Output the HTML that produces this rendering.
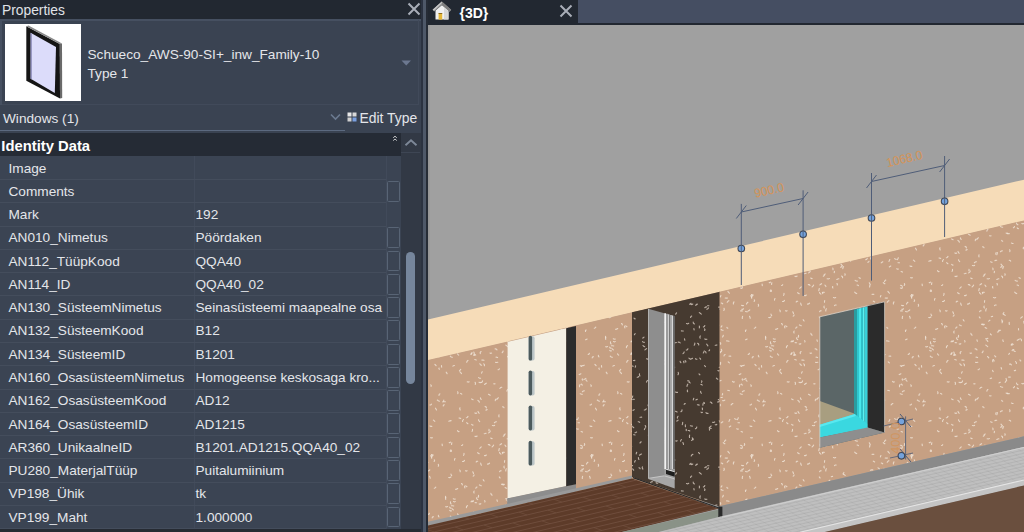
<!DOCTYPE html>
<html><head><meta charset="utf-8">
<style>
*{margin:0;padding:0;box-sizing:border-box}
html,body{width:1024px;height:532px;overflow:hidden;background:#222831;font-family:"Liberation Sans",sans-serif;color:#e4e6ea}
.a{position:absolute}
.t{position:absolute;white-space:pre;font-size:13.65px;line-height:16px}
.row{position:absolute;left:0;width:401px;height:23.3px;border-bottom:1px solid #465061;background:#3b4453}
.lab{position:absolute;left:8.5px;top:3.5px;font-size:13.6px;line-height:16px;white-space:pre;color:#e2e4e8}
.val{position:absolute;left:195.5px;top:3.5px;font-size:13.6px;line-height:16px;white-space:pre;color:#e2e4e8}
.cb{position:absolute;left:387px;width:13px;border:1.5px solid #586475;border-radius:1.5px}
</style></head>
<body>
<!-- Left properties panel -->
<div class="a" style="left:0;top:0;width:421px;height:19px;background:#222831"></div>
<div class="t" style="left:2px;top:3.2px;font-size:13.8px;color:#e0e3e8">Properties</div>
<svg class="a" style="left:406px;top:1px" width="16" height="16" viewBox="0 0 16 16"><path d="M2.5 2.5 L13.5 13.5 M13.5 2.5 L2.5 13.5" stroke="#a9aeb8" stroke-width="2"/></svg>

<!-- type selector -->
<div class="a" style="left:0;top:19px;width:421px;height:114px;background:#3a4352"></div>
<div class="a" style="left:0;top:19px;width:421px;height:1.5px;background:#465061"></div>
<div class="a" style="left:0;top:19px;width:2px;height:86px;background:#465061"></div>
<div class="a" style="left:2px;top:104px;width:417px;height:1px;background:#414a5a"></div>
<div class="a" style="left:418px;top:20px;width:1px;height:85px;background:#414a5a"></div>
<div class="a" style="left:5px;top:24px;width:76px;height:76.5px;background:#ffffff"></div>
<svg class="a" style="left:5px;top:24px" width="76" height="77" viewBox="0 0 76 77">
 <polygon points="21.3,2.2 54.8,20 55,74.6 21.3,56.7" fill="#151515"/>
 <polygon points="21.3,2.2 23.5,1.6 57,19.4 54.8,20" fill="#8a8a8a"/>
 <polygon points="54.8,20 57,19.4 57.2,74 55,74.6" fill="#6a6a6a"/>
 <polygon points="25.6,8.8 51,22.9 49.8,69 25.6,54.8" fill="#dcdcfa"/>
 <polygon points="25.6,8.8 26.8,9.4 26.8,55.5 25.6,54.8" fill="#8888b8"/>
</svg>
<div class="t" style="left:87.5px;top:46.8px">Schueco_AWS-90-SI+_inw_Family-10</div>
<div class="t" style="left:87.5px;top:66px">Type 1</div>
<svg class="a" style="left:400px;top:59px" width="13" height="8"><polygon points="1.5,1.5 11,1.5 6.25,6.5" fill="#6c7890"/></svg>

<div class="t" style="left:3px;top:110.5px">Windows (1)</div>
<svg class="a" style="left:329px;top:112px" width="13" height="10"><path d="M2 2.5 L6.5 7 L11 2.5" stroke="#6b7a90" stroke-width="1.6" fill="none"/></svg>
<div class="a" style="left:0;top:130.2px;width:345px;height:1.3px;background:#5c6a80"></div>
<svg class="a" style="left:347px;top:112px" width="10" height="10" viewBox="0 0 10 10">
 <rect x="0.5" y="0.5" width="4" height="4" fill="#e8e8e8"/><rect x="5.5" y="0.5" width="4" height="4" fill="#d8d8d8"/>
 <rect x="0.5" y="5.5" width="4" height="4" fill="#d0d0d0"/><rect x="5.5" y="5.5" width="4" height="4" fill="#7aa0e0"/>
</svg>
<div class="t" style="left:359.5px;top:109.5px;font-size:13.9px">Edit Type</div>

<!-- header -->
<div class="a" style="left:0;top:133.3px;width:401px;height:22.5px;background:#252b35"></div>
<div class="t" style="left:1.3px;top:137.5px;font-size:14.8px;font-weight:bold;color:#ffffff">Identity Data</div>
<svg class="a" style="left:392px;top:134.5px" width="6" height="7"><path d="M1.2 2.8 L3 1.2 L4.8 2.8 M1.2 5.6 L3 4 L4.8 5.6" stroke="#ddd" stroke-width="0.9" fill="none"/></svg>

<!-- scrollbar -->
<div class="a" style="left:401px;top:133.3px;width:20px;height:399px;background:#323945"></div>
<svg class="a" style="left:401px;top:134px" width="20" height="20"><path d="M4.5 11.3 L10 6.3 L15.5 11.3" stroke="#7d8898" stroke-width="1.9" fill="none"/></svg>
<div class="a" style="left:401px;top:151.8px;width:19px;height:1px;background:#3e4654"></div>
<div class="a" style="left:406px;top:252.4px;width:9.4px;height:132px;border-radius:5px;background:#76869c"></div>

<!-- panel right border -->
<div class="a" style="left:421px;top:0;width:2px;height:532px;background:#2b3240"></div>
<div class="a" style="left:422.8px;top:0;width:3px;height:532px;background:#4e5868"></div>
<div class="a" style="left:425.8px;top:0;width:2.2px;height:532px;background:#262c36"></div>

<div class="a" style="left:0;top:156.2px;width:401px;height:372.5px;background:#3b4453"></div>
<div class="a" style="left:193.8px;top:156.2px;width:1px;height:372.48px;background:#414a5a"></div>
<div class="a" style="left:385.5px;top:156.2px;width:1px;height:372.48px;background:#414a5a"></div>
<div class="a" style="left:0;top:178.98px;width:386px;height:1px;background:#444d5c"></div>
<div class="t" style="left:8.5px;top:160.50px">Image</div>
<div class="a" style="left:0;top:202.26px;width:386px;height:1px;background:#444d5c"></div>
<div class="t" style="left:8.5px;top:183.78px">Comments</div>
<div class="cb" style="top:180.68px;height:20.88px"></div>
<div class="a" style="left:0;top:225.54px;width:386px;height:1px;background:#444d5c"></div>
<div class="t" style="left:8.5px;top:207.06px">Mark</div>
<div class="t" style="left:195.5px;top:207.06px">192</div>
<div class="a" style="left:0;top:248.82px;width:386px;height:1px;background:#444d5c"></div>
<div class="t" style="left:8.5px;top:230.34px">AN010_Nimetus</div>
<div class="t" style="left:195.5px;top:230.34px">Pöördaken</div>
<div class="cb" style="top:227.24px;height:20.88px"></div>
<div class="a" style="left:0;top:272.10px;width:386px;height:1px;background:#444d5c"></div>
<div class="t" style="left:8.5px;top:253.62px">AN112_TüüpKood</div>
<div class="t" style="left:195.5px;top:253.62px">QQA40</div>
<div class="cb" style="top:250.52px;height:20.88px"></div>
<div class="a" style="left:0;top:295.38px;width:386px;height:1px;background:#444d5c"></div>
<div class="t" style="left:8.5px;top:276.90px">AN114_ID</div>
<div class="t" style="left:195.5px;top:276.90px">QQA40_02</div>
<div class="cb" style="top:273.80px;height:20.88px"></div>
<div class="a" style="left:0;top:318.66px;width:386px;height:1px;background:#444d5c"></div>
<div class="t" style="left:8.5px;top:300.18px">AN130_SüsteemNimetus</div>
<div class="t" style="left:195.5px;top:300.18px">Seinasüsteemi maapealne osa</div>
<div class="cb" style="top:297.08px;height:20.88px"></div>
<div class="a" style="left:0;top:341.94px;width:386px;height:1px;background:#444d5c"></div>
<div class="t" style="left:8.5px;top:323.46px">AN132_SüsteemKood</div>
<div class="t" style="left:195.5px;top:323.46px">B12</div>
<div class="cb" style="top:320.36px;height:20.88px"></div>
<div class="a" style="left:0;top:365.22px;width:386px;height:1px;background:#444d5c"></div>
<div class="t" style="left:8.5px;top:346.74px">AN134_SüsteemID</div>
<div class="t" style="left:195.5px;top:346.74px">B1201</div>
<div class="cb" style="top:343.64px;height:20.88px"></div>
<div class="a" style="left:0;top:388.50px;width:386px;height:1px;background:#444d5c"></div>
<div class="t" style="left:8.5px;top:370.02px">AN160_OsasüsteemNimetus</div>
<div class="t" style="left:195.5px;top:370.02px">Homogeense keskosaga kro...</div>
<div class="cb" style="top:366.92px;height:20.88px"></div>
<div class="a" style="left:0;top:411.78px;width:386px;height:1px;background:#444d5c"></div>
<div class="t" style="left:8.5px;top:393.30px">AN162_OsasüsteemKood</div>
<div class="t" style="left:195.5px;top:393.30px">AD12</div>
<div class="cb" style="top:390.20px;height:20.88px"></div>
<div class="a" style="left:0;top:435.06px;width:386px;height:1px;background:#444d5c"></div>
<div class="t" style="left:8.5px;top:416.58px">AN164_OsasüsteemID</div>
<div class="t" style="left:195.5px;top:416.58px">AD1215</div>
<div class="cb" style="top:413.48px;height:20.88px"></div>
<div class="a" style="left:0;top:458.34px;width:386px;height:1px;background:#444d5c"></div>
<div class="t" style="left:8.5px;top:439.86px">AR360_UnikaalneID</div>
<div class="t" style="left:195.5px;top:439.86px">B1201.AD1215.QQA40_02</div>
<div class="cb" style="top:436.76px;height:20.88px"></div>
<div class="a" style="left:0;top:481.62px;width:386px;height:1px;background:#444d5c"></div>
<div class="t" style="left:8.5px;top:463.14px">PU280_MaterjalTüüp</div>
<div class="t" style="left:195.5px;top:463.14px">Puitalumiinium</div>
<div class="cb" style="top:460.04px;height:20.88px"></div>
<div class="a" style="left:0;top:504.90px;width:386px;height:1px;background:#444d5c"></div>
<div class="t" style="left:8.5px;top:486.42px">VP198_Ühik</div>
<div class="t" style="left:195.5px;top:486.42px">tk</div>
<div class="cb" style="top:483.32px;height:20.88px"></div>
<div class="a" style="left:0;top:528.18px;width:386px;height:1px;background:#444d5c"></div>
<div class="t" style="left:8.5px;top:509.70px">VP199_Maht</div>
<div class="t" style="left:195.5px;top:509.70px">1.000000</div>
<div class="cb" style="top:506.60px;height:20.88px"></div>
<div class="a" style="left:0;top:528.6px;width:421px;height:4px;background:#262b33"></div>

<!-- tab bar -->
<div class="a" style="left:428px;top:0;width:596px;height:25px;background:#222831"></div>
<div class="a" style="left:578px;top:0;width:446px;height:23px;background:#454e62"></div>
<svg class="a" style="left:432px;top:1px" width="20" height="19" viewBox="0 0 20 19">
 <polygon points="3.5,9.5 10,4 16.5,9.5 16.5,18.6 3.5,18.6" fill="#f0f0f0"/>
 <polygon points="12,7 16.5,10.5 16.5,18.6 12,18.6" fill="#d8d8d8"/>
 <polygon points="9.8,0.5 19.2,8.8 17.6,10.8 9.8,3.8 2.2,10.6 0.6,8.8" fill="#9c9c9c"/>
 <polygon points="9.8,0.5 19.2,8.8 17.6,10.8 9.8,3.8" fill="#7e7e7e"/>
 <polygon points="0.6,8.8 9.8,0.5 9.8,2 2,9.4" fill="#c8c8c8"/>
 <rect x="6.6" y="12" width="3.6" height="6.6" fill="#e6b838"/>
 <rect x="6.6" y="12" width="3.6" height="1" fill="#8a6a20"/>
</svg>
<div class="t" style="left:459.5px;top:5px;font-size:14px;font-weight:bold;color:#ffffff">{3D}</div>
<svg class="a" style="left:558px;top:3px" width="16" height="16" viewBox="0 0 16 16"><path d="M2.5 2.5 L13.5 13.5 M13.5 2.5 L2.5 13.5" stroke="#a9aeb8" stroke-width="2"/></svg>

<!-- 3D view -->
<svg id="view" class="a" style="left:428px;top:25px" width="596" height="507" viewBox="428 25 596 507">
 <rect x="428" y="25" width="596" height="507" fill="#a0a0a0"/>
<defs>
<pattern id="wall" width="160" height="160" patternUnits="userSpaceOnUse"><rect width="160" height="160" fill="#c6a083"/><g stroke="#efe2d4" stroke-width="1.1" stroke-opacity="0.85" fill="none" stroke-linecap="round"><path d="M52.2 23.5L51.8 24.1L51.4 24.8"/><path d="M58.5 8.6L58.5 9.3L58.6 10.0"/><path d="M10.9 13.4L11.2 14.5L12.1 15.2"/><path d="M36.7 100.2L35.7 100.4L34.8 100.7"/><path d="M157.0 7.1L156.2 7.5L155.8 8.2"/><path d="M-3.0 7.1L-3.8 7.5L-4.2 8.2"/><path d="M19.5 48.9L18.8 49.4L18.1 49.7"/><path d="M102.3 58.9L102.2 59.6L102.7 60.2"/><path d="M32.8 108.0L33.0 108.9L33.0 109.7"/><path d="M73.4 47.3L72.5 48.0L72.0 48.9"/><path d="M92.9 83.6L91.9 84.0L91.1 84.8"/><path d="M156.5 17.8L156.8 18.9L157.7 19.6"/><path d="M-3.5 17.8L-3.2 18.9L-2.3 19.6"/><path d="M78.8 5.3L78.2 6.3L77.5 7.2"/><path d="M140.7 49.4L140.1 50.2L139.4 50.9"/><path d="M73.9 134.2L73.0 134.4L72.0 134.3"/><path d="M10.3 111.1L9.7 112.2L8.6 112.9"/><path d="M45.9 61.1L45.5 61.7L45.2 62.4"/><path d="M25.8 18.5L26.9 18.7L27.9 18.2"/><path d="M40.3 62.3L39.6 62.6L39.0 62.9"/><path d="M88.9 140.7L87.9 141.3L87.2 142.3"/><path d="M67.6 57.0L66.4 57.4L65.8 58.4"/><path d="M27.5 36.5L28.2 37.1L28.8 37.9"/><path d="M41.8 -0.2L42.0 0.7L42.2 1.5"/><path d="M41.8 159.8L42.0 160.7L42.2 161.5"/><path d="M152.5 109.4L152.5 110.5L152.1 111.4"/><path d="M9.5 143.2L8.6 143.9L7.5 144.1"/><path d="M61.8 63.5L62.8 63.8L63.7 63.4"/><path d="M10.0 33.0L10.8 33.4L11.6 33.1"/><path d="M-0.8 23.9L0.0 24.2L0.8 23.7"/><path d="M159.2 23.9L160.0 24.2L160.8 23.7"/><path d="M139.1 97.9L139.9 98.3L140.7 98.4"/><path d="M59.4 19.1L58.3 19.7L57.2 20.3"/><path d="M76.6 13.5L77.4 13.7L78.3 13.7"/><path d="M131.4 25.7L132.6 25.8L133.8 26.0"/><path d="M22.5 86.8L23.5 86.9L24.0 87.7"/><path d="M137.5 110.7L138.1 111.4L139.0 111.6"/><path d="M124.2 84.7L123.5 85.2L123.2 86.0"/><path d="M130.9 157.1L129.8 157.6L128.7 157.5"/><path d="M130.9 -2.9L129.8 -2.4L128.7 -2.5"/><path d="M118.4 35.4L118.4 36.3L119.0 36.9"/><path d="M3.7 43.9L4.5 44.7L4.4 45.8"/><path d="M72.8 149.9L71.6 149.9L70.4 150.3"/><path d="M34.6 35.8L35.3 36.3L35.8 36.9"/><path d="M144.0 133.4L144.0 134.5L143.6 135.4"/><path d="M14.6 105.4L13.6 105.7L12.4 105.5"/><path d="M77.2 28.0L76.5 28.6L75.6 28.7"/><path d="M155.1 62.2L155.5 63.3L155.3 64.5"/><path d="M26.1 19.8L27.2 20.3L27.8 21.4"/><path d="M24.4 132.2L23.4 132.2L22.4 132.6"/><path d="M86.6 20.9L87.8 21.0L89.0 21.3"/><path d="M84.0 148.2L84.3 149.4L83.8 150.5"/><path d="M33.3 39.6L33.8 40.3L34.2 41.0"/><path d="M40.4 66.6L41.5 67.0L42.7 67.2"/><path d="M74.2 93.1L73.3 93.3L72.5 92.9"/><path d="M80.3 84.4L80.3 85.1L80.3 85.8"/><path d="M29.9 0.2L29.3 0.6L28.7 1.1"/><path d="M29.9 160.2L29.3 160.6L28.7 161.1"/><path d="M115.5 88.2L116.0 89.0L116.5 89.9"/><path d="M125.6 16.2L125.5 17.0L125.7 17.8"/><path d="M123.8 80.1L123.6 81.2L122.7 81.9"/><path d="M70.9 97.0L70.9 98.0L70.6 98.9"/><path d="M72.3 84.1L72.4 85.3L72.0 86.5"/><path d="M139.6 150.0L140.2 150.7L140.2 151.8"/><path d="M133.5 21.6L134.4 21.9L135.3 21.6"/><path d="M39.1 10.7L38.5 11.7L37.4 12.1"/><path d="M25.1 113.9L24.7 114.6L24.0 114.9"/><path d="M155.7 35.0L154.8 35.1L153.9 35.3"/><path d="M157.6 132.7L158.4 133.2L159.2 133.7"/><path d="M-2.4 132.7L-1.6 133.2L-0.8 133.7"/><path d="M53.7 30.4L54.3 31.3L55.3 31.5"/><path d="M87.8 70.4L88.6 70.5L89.5 70.7"/><path d="M83.1 10.2L82.0 10.3L81.2 9.5"/><path d="M15.6 42.4L16.8 42.5L17.8 42.2"/><path d="M21.8 67.2L20.7 67.6L19.9 68.3"/><path d="M24.1 146.0L23.9 147.1L24.4 148.0"/><path d="M9.0 109.4L9.2 110.1L8.8 110.7"/><path d="M100.4 128.0L101.5 128.3L102.5 127.7"/><path d="M137.6 71.7L138.0 72.6L137.8 73.6"/><path d="M42.9 19.8L42.9 20.7L43.3 21.4"/><path d="M25.1 7.5L25.8 8.1L26.7 8.3"/><path d="M121.5 45.6L121.5 46.4L121.7 47.2"/><path d="M1.8 40.0L2.9 40.1L4.0 40.2"/><path d="M161.8 40.0L162.9 40.1L164.0 40.2"/><path d="M31.1 75.8L30.3 76.0L29.6 75.7"/><path d="M69.9 78.7L69.1 79.2L68.3 79.6"/><path d="M109.5 156.2L110.0 157.2L110.2 158.3"/><path d="M109.5 -3.8L110.0 -2.8L110.2 -1.7"/><path d="M101.4 64.1L101.8 64.8L102.4 65.1"/><path d="M10.8 118.0L11.3 118.5L12.1 118.6"/><path d="M135.0 138.6L134.6 139.3L134.5 140.1"/><path d="M46.1 73.1L46.9 73.5L47.8 73.6"/><path d="M154.0 154.8L153.9 155.6L153.2 156.1"/><path d="M48.6 57.1L49.5 57.1L50.4 57.0"/><path d="M80.5 31.5L80.4 32.2L80.7 32.8"/><path d="M13.7 63.8L14.4 63.9L15.1 63.8"/><path d="M37.4 92.6L37.2 93.7L36.8 94.7"/><path d="M114.3 139.8L114.6 140.7L114.1 141.4"/><path d="M24.2 115.2L23.9 115.9L23.3 116.2"/><path d="M143.5 99.5L142.7 100.4L142.6 101.5"/><path d="M84.8 80.1L83.8 80.7L82.7 80.6"/><path d="M94.0 141.9L93.4 142.9L93.4 143.9"/><path d="M4.7 20.6L5.0 21.3L4.9 22.0"/><path d="M89.8 99.5L89.4 100.4L89.0 101.4"/><path d="M1.2 126.9L0.5 127.6L-0.2 128.3"/><path d="M161.2 126.9L160.5 127.6L159.8 128.3"/><path d="M106.1 10.0L105.5 10.6L105.5 11.4"/><path d="M41.6 116.0L42.5 116.7L42.6 117.8"/><path d="M79.0 60.1L79.0 61.2L78.6 62.2"/><path d="M98.0 102.7L98.7 102.8L99.5 102.7"/><path d="M119.1 48.0L118.9 48.7L119.3 49.3"/><path d="M43.6 106.6L43.0 107.5L42.8 108.6"/><path d="M82.6 73.6L82.6 74.3L82.2 75.0"/><path d="M32.6 156.4L31.9 156.5L31.2 156.7"/><path d="M32.6 -3.6L31.9 -3.5L31.2 -3.3"/><path d="M131.0 154.1L131.2 154.9L131.7 155.6"/><path d="M151.5 33.0L151.3 33.7L151.1 34.5"/><path d="M153.3 20.7L152.4 21.2L151.5 21.1"/><path d="M113.5 36.7L112.5 37.0L112.2 37.9"/><path d="M0.4 77.8L0.6 78.7L1.2 79.3"/><path d="M160.4 77.8L160.6 78.7L161.2 79.3"/><path d="M55.6 50.2L55.0 50.6L54.3 50.6"/><path d="M135.3 19.0L134.3 19.2L133.3 18.7"/><path d="M46.0 58.4L46.4 59.6L46.6 60.8"/><path d="M57.2 67.9L57.7 68.5L58.4 68.6"/><path d="M134.4 45.5L133.5 45.7L132.9 46.2"/><path d="M81.3 29.2L81.8 30.4L81.4 31.5"/><path d="M131.1 100.6L129.9 100.9L128.7 101.2"/><path d="M115.8 7.2L115.1 7.9L114.3 8.3"/><path d="M101.9 45.6L103.1 45.8L104.2 45.2"/><path d="M74.9 54.1L75.5 55.0L75.3 56.1"/><path d="M41.0 104.1L41.6 105.0L42.4 105.6"/><path d="M25.8 25.1L26.8 25.9L27.7 26.6"/><path d="M36.2 145.0L35.2 145.0L34.5 145.6"/><path d="M30.4 13.9L30.8 14.5L31.4 14.9"/><path d="M42.4 90.8L41.3 91.1L40.4 91.7"/><path d="M65.9 83.0L66.2 83.9L67.0 84.2"/><path d="M43.5 154.5L44.4 154.8L45.2 155.4"/><path d="M137.5 33.9L138.1 34.6L138.7 35.1"/><path d="M72.4 152.1L71.3 152.6L71.1 153.8"/><path d="M6.1 113.2L5.2 113.5L4.2 113.7"/><path d="M1.2 62.4L0.0 62.6L-1.0 62.2"/><path d="M161.2 62.4L160.0 62.6L159.0 62.2"/><path d="M154.8 39.5L155.6 39.8L156.3 40.0"/><path d="M109.8 149.8L109.1 150.6L108.2 151.0"/><path d="M72.1 88.1L73.2 88.2L74.2 87.8"/><path d="M146.7 102.7L147.2 103.3L147.9 103.7"/><path d="M101.1 111.5L101.8 111.8L102.5 112.1"/><path d="M92.5 61.4L93.3 62.1L94.3 61.9"/><path d="M49.3 73.6L48.2 73.7L47.4 73.1"/><path d="M75.2 36.7L76.0 37.6L76.6 38.7"/><path d="M49.2 2.4L49.2 3.5L49.3 4.5"/><path d="M49.2 162.4L49.2 163.5L49.3 164.5"/><path d="M42.0 106.6L41.2 106.8L40.8 107.5"/><path d="M54.5 66.6L54.1 67.3L53.4 67.7"/><path d="M117.3 80.0L118.3 80.8L119.4 81.2"/><path d="M130.3 36.2L131.2 36.9L132.3 37.3"/><path d="M151.6 78.9L152.3 79.3L153.1 79.7"/><path d="M105.6 151.4L106.4 151.8L107.4 151.7"/><path d="M155.1 22.6L155.9 22.7L156.6 22.7"/><path d="M144.5 140.4L143.7 141.4L142.5 141.5"/><path d="M53.8 29.5L52.7 29.7L52.1 30.6"/><path d="M106.0 59.8L106.3 60.6L107.0 61.1"/><path d="M-0.1 43.7L0.5 44.8L1.6 45.3"/><path d="M159.9 43.7L160.5 44.8L161.6 45.3"/><path d="M153.8 32.1L154.3 33.2L154.1 34.3"/><path d="M69.1 7.0L69.2 7.9L68.6 8.6"/><path d="M31.6 58.1L30.9 58.3L30.2 58.6"/><path d="M129.2 122.6L129.9 122.7L130.5 122.2"/><path d="M148.0 40.3L147.2 41.1L146.7 42.2"/><path d="M43.9 152.4L43.6 153.2L43.0 153.8"/><path d="M49.5 44.1L50.6 44.1L51.4 44.9"/><path d="M100.6 150.9L101.4 150.9L102.3 150.9"/><path d="M152.8 151.8L153.1 152.6L153.5 153.4"/><path d="M78.0 147.9L79.0 148.5L79.6 149.5"/><path d="M131.9 122.8L131.6 123.6L131.6 124.5"/><path d="M57.1 125.0L57.9 125.2L58.5 125.7"/><path d="M38.6 10.3L39.6 10.4L40.6 10.2"/><path d="M157.7 141.3L156.8 141.4L156.2 142.0"/><path d="M-2.3 141.3L-3.2 141.4L-3.8 142.0"/><path d="M16.0 79.0L15.4 79.8L15.3 80.7"/><path d="M67.3 98.3L66.7 99.2L65.7 99.7"/><path d="M107.1 19.0L106.3 19.4L105.5 19.7"/><path d="M59.0 117.6L59.7 118.1L60.5 118.2"/><path d="M24.7 140.6L24.5 141.5L24.5 142.3"/><path d="M157.9 80.4L158.8 81.2L159.4 82.1"/><path d="M-2.1 80.4L-1.2 81.2L-0.6 82.1"/><path d="M158.5 15.2L158.6 16.4L158.0 17.4"/><path d="M-1.5 15.2L-1.4 16.4L-2.0 17.4"/><path d="M145.8 5.8L146.3 6.5L147.0 6.7"/><path d="M156.6 93.1L155.7 93.3L154.9 92.9"/><path d="M72.8 40.8L71.9 41.6L71.7 42.8"/><path d="M94.7 98.6L95.4 99.2L96.3 99.2"/><path d="M33.0 39.8L32.6 40.8L32.9 41.8"/><path d="M2.2 51.7L1.8 52.4L1.6 53.1"/><path d="M162.2 51.7L161.8 52.4L161.6 53.1"/><path d="M32.7 126.5L32.5 127.2L32.9 127.9"/><path d="M63.6 87.3L63.2 88.0L63.4 88.8"/><path d="M110.7 64.9L111.3 65.6L111.1 66.4"/><path d="M49.6 89.8L50.0 90.6L49.8 91.6"/><path d="M158.6 57.6L159.5 58.2L160.6 58.3"/><path d="M-1.4 57.6L-0.5 58.2L0.6 58.3"/><path d="M0.7 143.1L0.9 144.3L1.4 145.3"/><path d="M160.7 143.1L160.9 144.3L161.4 145.3"/><path d="M140.6 73.4L141.3 73.7L141.8 74.1"/><path d="M101.5 145.3L102.5 145.6L103.5 145.6"/><path d="M80.1 22.6L80.7 23.3L80.6 24.3"/><path d="M18.4 77.8L17.4 78.5L16.9 79.6"/><path d="M21.2 150.8L20.3 150.9L19.6 151.6"/><path d="M149.2 61.8L148.2 62.1L147.2 61.8"/><path d="M24.9 125.1L25.6 125.7L25.9 126.6"/><path d="M132.0 28.7L132.7 29.3L133.4 29.9"/><path d="M60.6 18.9L61.4 19.7L61.5 20.8"/><path d="M7.1 89.5L6.6 90.0L5.9 90.1"/><path d="M19.0 94.9L18.8 95.9L19.0 96.9"/><path d="M67.0 92.2L67.2 93.2L67.6 94.2"/><path d="M70.5 2.8L70.1 3.7L70.2 4.7"/><path d="M70.5 162.8L70.1 163.7L70.2 164.7"/><path d="M122.1 124.0L122.2 124.8L122.3 125.6"/><path d="M17.0 19.8L17.1 20.6L17.4 21.3"/><path d="M81.9 5.8L81.6 6.5L81.1 7.0"/><path d="M123.5 81.7L124.4 81.8L125.4 81.8"/><path d="M153.3 21.2L152.1 21.8L150.9 21.8"/><path d="M131.4 30.9L130.4 31.0L129.7 30.3"/><path d="M147.5 25.7L146.6 26.4L146.4 27.6"/><path d="M55.1 120.4L56.1 121.0L57.3 121.1"/><path d="M130.5 21.8L130.5 23.0L131.1 24.0"/><path d="M41.7 80.4L42.1 81.0L42.7 81.3"/><path d="M26.4 148.8L25.8 149.8L25.8 151.0"/><path d="M125.7 17.4L125.6 18.4L125.7 19.4"/><path d="M140.0 87.7L139.7 88.8L140.2 89.9"/><path d="M158.5 99.7L158.9 100.8L159.7 101.6"/><path d="M-1.5 99.7L-1.1 100.8L-0.3 101.6"/><path d="M158.0 91.4L158.5 92.4L159.1 93.3"/><path d="M-2.0 91.4L-1.5 92.4L-0.9 93.3"/><path d="M27.1 118.8L28.3 119.0L29.4 118.6"/><path d="M102.6 156.4L102.3 157.4L102.3 158.5"/><path d="M102.6 -3.6L102.3 -2.6L102.3 -1.5"/><path d="M-0.6 4.9L0.3 5.4L1.3 5.8"/><path d="M159.4 4.9L160.3 5.4L161.3 5.8"/><path d="M81.3 143.0L82.0 143.3L82.7 143.8"/><path d="M3.2 -0.3L3.6 0.4L4.1 1.0"/><path d="M3.2 159.7L3.6 160.4L4.1 161.0"/><path d="M163.2 -0.3L163.6 0.4L164.1 1.0"/><path d="M163.2 159.7L163.6 160.4L164.1 161.0"/><path d="M36.1 92.6L35.9 93.4L35.5 94.1"/><path d="M76.8 21.4L76.0 21.6L75.4 22.2"/><path d="M16.4 101.7L15.3 102.1L14.4 102.7"/><path d="M42.7 0.9L42.3 1.8L42.1 2.8"/><path d="M42.7 160.9L42.3 161.8L42.1 162.8"/><path d="M104.4 70.8L103.3 71.0L102.4 71.7"/><path d="M144.7 6.1L144.6 7.0L144.9 7.9"/><path d="M8.3 124.6L9.3 124.6L10.0 125.4"/><path d="M23.1 31.0L22.8 31.9L22.2 32.7"/><path d="M129.7 27.2L130.1 27.9L131.0 28.1"/><path d="M142.7 124.7L142.3 125.3L141.6 125.5"/><path d="M119.9 73.8L119.2 74.4L119.0 75.4"/><path d="M16.0 37.1L16.8 37.2L17.6 37.6"/><path d="M111.7 134.6L111.2 135.3L110.6 135.9"/><path d="M69.8 125.3L69.8 126.2L69.5 127.0"/><path d="M155.1 34.5L154.4 34.7L153.9 35.2"/><path d="M38.9 118.8L37.8 119.0L36.8 119.5"/><path d="M140.0 51.8L140.8 52.6L141.5 53.6"/><path d="M111.8 106.4L110.9 106.4L110.0 105.9"/><path d="M111.4 136.1L111.6 137.2L111.7 138.3"/><path d="M49.5 33.2L49.2 33.9L48.6 34.2"/><path d="M22.0 3.9L23.1 4.3L24.3 4.4"/><path d="M21.6 4.5L22.7 4.6L23.7 5.0"/><path d="M110.5 117.7L111.5 117.9L112.5 117.8"/><path d="M131.5 130.9L130.8 131.1L130.1 130.9"/><path d="M145.5 150.8L146.3 151.1L147.1 150.8"/><path d="M6.4 135.1L5.5 135.6L4.5 135.6"/><path d="M100.3 45.7L101.0 46.0L101.6 46.5"/><path d="M32.6 50.4L32.8 51.1L33.2 51.6"/><path d="M44.9 113.7L45.2 114.5L44.9 115.3"/><path d="M80.9 135.6L80.6 136.2L80.4 136.9"/><path d="M69.3 122.7L69.8 123.7L70.3 124.7"/><path d="M33.5 137.6L34.7 138.0L35.7 137.6"/><path d="M1.1 31.5L0.2 32.3L0.3 33.6"/><path d="M161.1 31.5L160.2 32.3L160.3 33.6"/><path d="M79.2 78.2L78.5 78.6L77.9 79.1"/><path d="M54.7 132.2L55.5 133.1L56.7 133.6"/><path d="M34.4 111.2L34.4 111.9L34.2 112.7"/><path d="M13.6 125.1L12.9 126.1L12.1 126.8"/><path d="M56.5 63.1L56.9 64.2L57.9 64.8"/><path d="M141.5 3.5L142.2 4.0L142.3 4.9"/><path d="M81.0 60.4L80.2 60.7L79.4 61.0"/><path d="M85.8 120.0L85.0 120.7L84.5 121.6"/><path d="M53.2 24.3L52.3 24.9L51.2 24.9"/><path d="M27.9 69.5L27.1 70.2L26.9 71.2"/><path d="M73.3 141.1L73.9 141.6L74.7 141.9"/><path d="M111.8 134.6L112.5 135.0L113.3 135.0"/><path d="M51.5 83.1L52.3 83.5L53.1 83.5"/><path d="M154.9 116.2L156.0 116.6L157.2 116.1"/><path d="M-5.1 116.2L-4.0 116.6L-2.8 116.1"/><path d="M62.4 156.8L61.5 157.4L60.7 158.2"/><path d="M62.4 -3.2L61.5 -2.6L60.7 -1.8"/><path d="M30.6 101.8L31.4 102.1L32.2 102.2"/><path d="M6.3 63.2L5.4 63.8L4.6 64.5"/><path d="M100.2 73.7L101.2 74.1L102.2 74.4"/><path d="M118.3 144.3L118.6 145.3L118.3 146.3"/><path d="M68.1 35.7L67.4 36.6L66.3 37.0"/><path d="M112.6 135.5L112.0 136.4L111.5 137.3"/><path d="M49.2 100.2L50.1 100.5L50.7 101.2"/><path d="M113.4 100.1L114.1 100.7L114.8 101.3"/><path d="M100.1 64.5L99.5 65.5L99.5 66.7"/><path d="M104.4 123.6L104.7 124.5L104.2 125.4"/><path d="M5.1 86.4L6.1 86.9L6.4 88.0"/><path d="M83.3 15.2L83.1 16.2L82.5 17.0"/><path d="M82.8 101.8L82.0 102.3L81.2 102.9"/><path d="M152.2 32.8L151.7 33.6L150.9 34.1"/><path d="M19.3 156.9L19.6 157.5L20.1 158.0"/><path d="M19.3 -3.1L19.6 -2.5L20.1 -2.0"/><path d="M63.7 1.2L63.9 2.1L63.9 3.1"/><path d="M63.7 161.2L63.9 162.1L63.9 163.1"/><path d="M55.5 41.7L56.3 42.4L56.4 43.5"/><path d="M85.1 34.5L84.3 35.0L84.0 35.9"/><path d="M21.6 123.7L20.7 124.3L19.9 124.9"/><path d="M90.8 36.1L89.9 36.2L89.0 36.0"/><path d="M130.9 129.7L131.0 130.6L131.0 131.5"/><path d="M19.5 132.4L20.0 133.4L20.9 134.1"/><path d="M60.0 39.8L60.2 40.6L60.9 40.9"/><path d="M114.9 44.4L115.5 45.0L116.1 45.6"/><path d="M69.0 101.2L68.6 102.0L67.7 102.2"/><path d="M137.7 8.5L136.7 9.1L135.5 9.2"/><path d="M22.8 132.4L22.5 133.0L22.8 133.6"/><path d="M151.7 104.4L152.3 105.0L153.0 105.1"/><path d="M37.0 123.5L37.4 124.2L37.2 125.0"/><path d="M127.6 26.5L126.7 26.9L125.6 26.7"/><path d="M107.9 142.3L107.0 143.0L106.5 144.1"/><path d="M111.5 84.2L110.8 84.9L109.9 85.0"/><path d="M88.2 41.8L88.8 42.3L89.4 42.8"/><path d="M8.5 74.3L9.4 74.7L10.2 75.2"/><path d="M85.2 138.0L86.3 138.1L87.5 138.0"/><path d="M90.8 106.0L90.0 106.4L89.3 107.0"/><path d="M154.1 11.1L153.7 12.1L154.1 13.0"/><path d="M98.4 109.0L97.5 109.2L96.8 108.7"/><path d="M82.4 77.3L81.7 77.5L81.0 77.5"/><path d="M100.9 53.8L100.0 54.2L99.2 54.6"/><path d="M83.3 122.7L84.1 123.3L84.9 123.8"/><path d="M87.9 131.4L88.6 132.3L89.5 133.1"/><path d="M80.6 42.2L80.6 43.5L80.2 44.7"/><path d="M126.2 52.2L126.7 52.9L127.1 53.7"/><path d="M100.5 125.3L101.6 125.5L102.3 126.3"/><path d="M86.9 7.4L87.3 8.0L87.9 8.2"/><path d="M148.0 96.4L147.4 97.4L146.4 97.8"/><path d="M98.3 97.7L97.9 98.7L97.3 99.6"/><path d="M109.4 33.2L109.0 34.0L108.2 34.5"/><path d="M15.1 28.9L16.2 29.0L17.0 29.9"/><path d="M105.9 58.4L104.9 59.0L103.9 59.5"/><path d="M41.1 47.5L41.3 48.3L41.6 49.1"/><path d="M101.7 149.2L102.7 149.4L103.5 148.8"/><path d="M19.3 128.5L19.0 129.7L18.8 130.8"/><path d="M2.6 60.8L2.3 61.9L1.1 62.4"/><path d="M162.6 60.8L162.3 61.9L161.1 62.4"/><path d="M75.1 65.7L76.1 66.0L77.1 65.8"/></g></pattern>
<pattern id="dark" width="160" height="160" patternUnits="userSpaceOnUse"><rect width="160" height="160" fill="#463a30"/><g stroke="#d8ccc0" stroke-width="1.1" stroke-opacity="0.8" fill="none" stroke-linecap="round"><path d="M23.2 2.5L24.3 2.5L25.1 1.8"/><path d="M23.2 162.5L24.3 162.5L25.1 161.8"/><path d="M155.3 13.8L154.6 14.1L154.4 14.8"/><path d="M115.6 38.2L115.1 38.8L115.2 39.6"/><path d="M124.8 113.7L123.8 114.2L123.4 115.2"/><path d="M100.4 112.3L100.6 113.5L101.2 114.5"/><path d="M153.6 114.7L154.3 114.8L155.0 115.0"/><path d="M130.2 11.8L130.8 12.7L131.8 13.2"/><path d="M136.9 77.6L137.8 77.8L138.6 78.1"/><path d="M69.2 107.8L70.2 108.3L71.3 108.5"/><path d="M102.9 99.9L103.2 100.8L102.9 101.6"/><path d="M151.4 124.7L151.2 125.5L151.7 126.3"/><path d="M156.6 112.1L155.8 112.5L155.0 112.8"/><path d="M156.7 132.2L156.4 133.0L156.2 133.9"/><path d="M-3.3 132.2L-3.6 133.0L-3.8 133.9"/><path d="M142.7 59.4L142.1 60.3L141.1 60.6"/><path d="M128.4 45.3L129.2 45.3L130.0 45.2"/><path d="M94.5 130.3L93.9 130.6L93.2 130.4"/><path d="M130.1 137.9L129.9 138.8L129.2 139.3"/><path d="M130.0 109.3L129.1 109.5L128.7 110.3"/><path d="M87.7 126.9L88.6 127.6L88.8 128.7"/><path d="M38.0 96.3L37.4 97.1L37.4 98.1"/><path d="M41.5 119.6L40.8 120.2L40.6 121.1"/><path d="M128.3 122.9L129.1 123.5L129.2 124.6"/><path d="M141.5 82.5L141.6 83.5L142.2 84.3"/><path d="M31.3 28.2L30.8 28.9L30.2 29.6"/><path d="M63.8 82.4L64.4 82.8L64.5 83.5"/><path d="M60.3 15.9L59.8 17.0L60.1 18.1"/><path d="M95.6 54.5L95.6 55.2L96.1 55.7"/><path d="M158.4 137.6L158.5 138.6L158.9 139.5"/><path d="M-1.6 137.6L-1.5 138.6L-1.1 139.5"/><path d="M125.8 68.0L124.7 68.2L123.6 67.7"/><path d="M153.4 40.5L154.2 40.6L154.9 40.3"/><path d="M13.6 7.0L13.4 8.2L13.3 9.3"/><path d="M150.5 145.4L151.6 145.6L152.6 145.6"/><path d="M18.5 152.8L19.2 153.5L19.7 154.4"/><path d="M152.7 106.3L153.0 107.2L153.8 107.7"/><path d="M154.0 158.2L154.5 158.7L155.2 158.9"/><path d="M154.0 -1.8L154.5 -1.3L155.2 -1.1"/><path d="M57.4 144.1L56.3 144.4L55.8 145.5"/><path d="M126.4 112.4L125.8 113.5L126.2 114.7"/><path d="M24.2 120.6L23.2 120.8L22.3 121.4"/><path d="M93.8 121.0L94.6 121.3L95.5 121.2"/><path d="M19.1 76.6L19.9 77.0L20.7 76.9"/><path d="M108.9 1.4L108.4 2.0L108.5 2.8"/><path d="M108.9 161.4L108.4 162.0L108.5 162.8"/><path d="M149.6 35.0L148.4 35.3L147.4 34.7"/><path d="M21.2 71.2L22.4 71.6L23.1 72.5"/><path d="M100.0 71.4L100.5 72.4L101.1 73.4"/><path d="M99.9 22.4L100.5 22.8L100.9 23.5"/><path d="M89.3 22.8L88.5 23.2L87.8 23.6"/><path d="M25.7 43.0L24.9 43.4L24.5 44.2"/><path d="M79.3 50.7L78.6 50.9L77.9 50.5"/><path d="M9.5 142.5L9.1 143.2L8.7 143.9"/><path d="M45.1 40.7L45.8 41.2L45.8 42.1"/><path d="M158.9 147.8L159.7 148.0L160.1 148.7"/><path d="M-1.1 147.8L-0.3 148.0L0.1 148.7"/><path d="M8.4 115.2L9.2 116.2L10.4 116.3"/><path d="M128.5 54.2L129.1 54.5L129.5 55.1"/><path d="M84.0 28.6L84.3 29.7L85.0 30.6"/><path d="M90.5 21.5L91.4 22.1L92.1 23.0"/><path d="M30.5 12.4L31.5 12.7L32.5 13.0"/><path d="M44.2 31.9L43.8 33.0L43.0 33.6"/><path d="M92.2 32.1L93.3 32.4L94.4 32.4"/><path d="M116.2 8.4L115.5 8.9L114.6 8.8"/><path d="M137.1 78.8L138.3 78.9L139.5 78.9"/><path d="M138.6 42.0L139.5 42.6L140.6 43.0"/><path d="M26.4 58.7L26.2 59.4L25.9 60.1"/><path d="M70.3 82.1L71.3 82.5L72.0 83.4"/><path d="M139.0 50.6L138.5 51.4L137.7 51.8"/><path d="M10.8 139.5L9.8 139.6L8.8 139.8"/><path d="M83.7 85.9L84.9 86.0L86.0 85.5"/><path d="M28.4 15.6L29.2 16.4L30.3 16.4"/><path d="M14.9 111.4L15.4 111.8L15.9 112.3"/><path d="M92.7 83.1L92.2 83.7L91.5 83.9"/><path d="M113.8 6.9L114.7 7.2L115.6 7.6"/><path d="M44.5 18.8L44.7 19.5L44.8 20.3"/><path d="M138.0 22.5L137.8 23.6L138.2 24.6"/><path d="M131.8 149.1L132.2 150.0L131.9 150.9"/><path d="M85.2 63.1L84.1 63.3L83.1 63.8"/><path d="M38.2 52.4L38.5 53.6L38.0 54.8"/><path d="M146.7 130.1L146.0 130.4L145.4 130.7"/><path d="M152.6 148.8L153.3 149.5L153.7 150.3"/><path d="M57.4 84.7L58.3 84.9L59.2 85.1"/><path d="M4.5 22.2L3.3 22.3L2.5 21.6"/><path d="M164.5 22.2L163.3 22.3L162.5 21.6"/><path d="M102.4 129.1L101.3 129.5L100.9 130.6"/><path d="M103.1 41.8L102.7 42.5L102.1 43.2"/><path d="M147.2 98.7L147.9 99.4L148.7 100.0"/><path d="M151.5 45.1L152.1 46.0L153.2 46.3"/><path d="M95.1 152.1L95.1 153.0L95.1 153.8"/><path d="M84.7 23.5L85.4 23.7L86.2 23.8"/><path d="M64.5 45.6L65.0 46.1L65.5 46.7"/><path d="M134.6 96.6L134.4 97.6L134.7 98.6"/><path d="M113.8 72.7L113.7 73.7L113.6 74.8"/><path d="M48.9 38.1L49.7 38.8L50.5 39.2"/><path d="M93.2 0.9L93.7 1.9L94.7 2.6"/><path d="M93.2 160.9L93.7 161.9L94.7 162.6"/><path d="M88.3 77.7L89.1 78.6L90.1 79.3"/><path d="M122.4 25.1L123.5 25.4L124.7 25.5"/><path d="M9.7 61.0L9.9 62.1L10.8 62.8"/><path d="M36.6 152.9L36.0 153.5L35.7 154.2"/><path d="M56.8 107.0L56.4 108.1L55.4 108.7"/><path d="M83.6 117.4L82.8 118.2L82.1 119.0"/><path d="M126.3 113.2L125.6 113.4L124.9 113.1"/><path d="M1.0 121.6L0.7 122.5L-0.2 122.9"/><path d="M161.0 121.6L160.7 122.5L159.8 122.9"/><path d="M92.4 66.1L91.5 66.9L90.5 67.4"/><path d="M60.6 71.3L60.7 72.4L61.3 73.3"/><path d="M62.2 88.0L62.5 88.9L62.4 89.7"/><path d="M135.8 79.1L135.9 79.9L136.3 80.6"/><path d="M23.4 91.3L23.2 92.1L22.6 92.5"/><path d="M52.9 134.3L51.8 134.9L51.2 136.0"/><path d="M67.5 145.7L68.2 145.7L68.9 145.8"/><path d="M80.3 146.6L79.6 147.2L78.6 147.1"/><path d="M83.3 82.0L82.8 82.8L82.5 83.6"/><path d="M96.2 56.0L95.2 56.2L94.1 56.3"/><path d="M15.5 58.9L15.8 59.9L16.0 60.9"/><path d="M140.7 153.4L140.8 154.3L140.6 155.2"/><path d="M159.5 53.8L159.4 54.9L159.9 55.9"/><path d="M-0.5 53.8L-0.6 54.9L-0.1 55.9"/><path d="M51.7 156.0L50.9 156.5L50.6 157.5"/><path d="M51.7 -4.0L50.9 -3.5L50.6 -2.5"/><path d="M144.2 109.7L143.1 110.4L141.9 110.2"/><path d="M66.7 24.2L67.3 25.0L67.9 25.8"/><path d="M30.5 28.2L30.1 29.2L29.9 30.2"/><path d="M158.1 101.7L159.0 101.8L159.7 102.4"/><path d="M-1.9 101.7L-1.0 101.8L-0.3 102.4"/><path d="M48.2 110.5L49.1 110.5L49.8 111.0"/><path d="M93.0 106.3L93.8 106.9L94.5 107.5"/><path d="M42.7 102.2L42.6 103.5L42.3 104.7"/><path d="M64.8 18.9L65.8 19.4L66.9 19.2"/><path d="M16.1 26.1L16.0 27.3L15.7 28.4"/><path d="M127.9 9.9L129.1 9.9L130.1 9.6"/><path d="M113.7 56.2L114.5 56.6L115.3 56.5"/><path d="M144.2 92.3L144.6 93.2L145.2 93.9"/><path d="M9.1 141.3L8.7 142.5L8.6 143.7"/><path d="M98.0 39.7L99.2 39.9L100.1 40.7"/><path d="M51.1 143.3L50.4 143.8L49.6 144.2"/><path d="M154.4 79.2L153.6 79.3L152.8 79.6"/><path d="M114.3 34.4L115.0 35.4L115.6 36.4"/><path d="M126.1 38.5L126.8 38.9L127.7 38.9"/><path d="M155.6 45.8L155.4 46.5L155.3 47.3"/><path d="M60.9 64.4L61.7 64.5L62.2 65.1"/><path d="M55.5 38.7L56.2 39.2L57.0 39.3"/><path d="M5.2 105.6L5.6 106.3L5.7 107.1"/><path d="M15.5 42.8L14.8 43.1L14.2 43.6"/><path d="M133.0 128.4L133.8 128.8L134.4 129.5"/><path d="M59.3 152.6L60.3 153.3L61.3 154.1"/><path d="M35.4 72.0L36.4 72.4L37.5 72.4"/><path d="M143.6 93.2L143.9 94.0L144.1 94.8"/><path d="M33.1 139.2L34.0 139.6L34.9 140.0"/><path d="M42.9 122.5L43.3 123.5L43.5 124.5"/><path d="M49.0 62.2L49.7 62.4L50.2 63.0"/><path d="M50.4 105.7L51.4 106.0L52.4 106.1"/><path d="M79.2 47.3L80.1 47.5L80.9 47.3"/><path d="M19.6 114.0L20.2 114.7L20.1 115.6"/><path d="M124.7 140.9L124.0 141.2L123.5 141.8"/><path d="M5.2 108.0L4.7 108.7L4.4 109.6"/><path d="M104.6 111.1L105.5 111.9L106.5 112.5"/><path d="M99.5 28.6L100.6 29.1L101.5 29.9"/><path d="M113.2 6.4L114.0 6.5L114.7 6.2"/><path d="M47.6 60.8L48.5 60.9L49.3 61.2"/><path d="M29.0 133.2L28.7 134.3L29.0 135.4"/><path d="M69.3 108.9L69.6 109.5L69.5 110.2"/><path d="M123.1 45.7L124.2 45.8L125.3 46.2"/><path d="M6.5 38.7L7.6 39.1L8.7 38.9"/><path d="M145.3 119.6L146.3 119.9L147.4 120.0"/><path d="M119.1 132.0L119.6 132.6L119.5 133.3"/><path d="M68.5 147.9L67.8 148.8L66.8 149.2"/><path d="M99.4 72.3L100.5 72.4L101.6 72.5"/><path d="M80.9 148.1L81.9 148.5L82.9 148.0"/><path d="M111.8 128.2L112.4 128.9L112.3 129.9"/><path d="M101.5 86.5L102.0 87.0L102.6 87.4"/><path d="M65.4 31.6L65.9 32.2L66.0 33.0"/><path d="M106.5 37.4L107.3 38.1L108.0 38.7"/><path d="M149.0 55.3L149.7 56.2L150.9 56.6"/><path d="M91.0 52.8L90.1 53.4L89.1 53.5"/><path d="M27.4 105.7L27.1 106.6L26.4 107.3"/><path d="M132.4 17.6L133.0 18.3L133.8 18.7"/><path d="M8.8 44.3L9.7 44.9L10.6 45.5"/><path d="M18.0 51.0L18.1 51.9L18.7 52.6"/><path d="M12.6 1.7L11.5 1.7L10.7 2.5"/><path d="M12.6 161.7L11.5 161.7L10.7 162.5"/><path d="M114.9 156.1L114.7 156.8L114.6 157.6"/><path d="M114.9 -3.9L114.7 -3.2L114.6 -2.4"/><path d="M69.6 29.7L69.5 30.4L68.9 30.8"/><path d="M104.2 100.2L103.1 100.4L102.3 101.1"/><path d="M38.2 22.1L39.4 22.2L40.2 22.9"/><path d="M47.9 28.7L47.4 29.7L46.3 30.1"/><path d="M27.9 125.0L27.0 125.5L26.2 126.4"/><path d="M29.0 131.3L29.5 132.1L29.9 132.9"/><path d="M58.6 132.5L59.1 133.0L59.5 133.6"/><path d="M101.2 130.2L100.5 131.2L99.3 131.3"/><path d="M78.3 79.5L79.1 79.9L79.8 80.4"/><path d="M12.0 109.6L12.8 110.1L13.0 111.0"/><path d="M14.2 5.6L14.3 6.4L14.2 7.2"/><path d="M1.5 134.0L0.4 134.5L-0.5 135.2"/><path d="M161.5 134.0L160.4 134.5L159.5 135.2"/><path d="M45.4 104.9L45.3 105.9L45.5 106.8"/><path d="M71.2 106.0L70.2 106.6L69.7 107.7"/><path d="M47.5 70.0L47.3 70.9L47.6 71.7"/><path d="M13.5 50.6L13.6 51.8L12.9 52.8"/><path d="M139.5 155.8L138.5 155.9L137.5 155.5"/><path d="M9.9 107.4L9.6 108.2L9.2 109.0"/><path d="M152.8 76.1L152.4 76.9L152.3 77.8"/><path d="M140.7 3.9L141.6 4.5L142.6 5.0"/><path d="M13.2 104.7L13.6 105.7L14.2 106.5"/><path d="M84.6 89.6L84.8 90.4L85.4 90.8"/><path d="M141.3 87.3L142.4 87.7L143.6 87.6"/><path d="M14.5 84.2L15.2 84.9L15.8 85.7"/><path d="M35.3 91.3L36.2 91.6L37.1 92.1"/><path d="M11.9 65.1L12.8 65.3L13.4 66.0"/><path d="M88.6 113.8L88.1 114.3L87.3 114.2"/><path d="M116.2 15.9L115.5 16.3L115.1 17.2"/><path d="M154.2 89.6L153.6 90.1L152.8 90.2"/><path d="M8.9 37.3L9.2 37.9L9.4 38.6"/><path d="M34.7 47.2L34.1 48.0L33.2 48.2"/><path d="M99.6 138.4L99.4 139.5L98.5 140.3"/><path d="M26.3 118.3L26.9 119.3L27.1 120.4"/><path d="M131.7 18.6L132.1 19.6L131.7 20.7"/><path d="M115.7 6.2L115.5 7.0L115.2 7.7"/><path d="M129.5 17.8L128.5 18.1L127.6 18.7"/><path d="M31.8 71.0L30.9 71.5L30.5 72.4"/><path d="M4.0 17.2L3.4 17.7L2.7 18.1"/><path d="M164.0 17.2L163.4 17.7L162.7 18.1"/><path d="M46.1 109.2L46.4 109.9L46.2 110.7"/><path d="M87.2 109.6L86.1 110.3L86.0 111.5"/><path d="M54.8 23.0L54.8 24.1L54.2 25.2"/><path d="M6.6 28.6L5.7 29.2L4.9 29.9"/><path d="M76.9 24.9L76.1 25.3L75.2 25.2"/><path d="M97.3 11.4L97.7 12.1L97.6 12.9"/><path d="M93.5 6.5L94.3 7.0L95.1 7.4"/><path d="M92.0 61.4L92.3 62.1L92.5 62.7"/><path d="M53.2 2.0L53.4 3.3L54.4 4.0"/><path d="M53.2 162.0L53.4 163.3L54.4 164.0"/><path d="M22.8 106.7L23.3 107.4L23.9 108.0"/><path d="M42.0 89.8L41.9 91.0L40.9 91.7"/><path d="M6.3 88.9L5.5 89.7L4.3 90.0"/><path d="M100.9 100.8L101.3 101.5L101.2 102.4"/><path d="M140.1 149.5L139.7 150.2L138.9 150.6"/><path d="M118.7 80.6L118.3 81.4L117.9 82.2"/><path d="M64.5 8.9L65.0 9.7L64.6 10.5"/><path d="M76.4 58.2L77.0 58.8L77.8 59.2"/><path d="M22.6 0.8L21.7 1.2L20.9 1.6"/><path d="M22.6 160.8L21.7 161.2L20.9 161.6"/><path d="M90.4 48.0L91.0 48.4L91.7 48.5"/><path d="M49.6 115.1L49.4 116.3L49.5 117.5"/><path d="M146.6 93.1L147.4 93.3L148.1 93.6"/><path d="M158.7 56.5L158.0 57.1L157.1 57.2"/><path d="M-1.3 56.5L-2.0 57.1L-2.9 57.2"/><path d="M11.6 77.3L10.8 77.5L10.2 78.1"/><path d="M3.0 25.5L3.7 26.3L4.7 26.7"/><path d="M163.0 25.5L163.7 26.3L164.7 26.7"/><path d="M64.3 30.9L63.9 32.1L63.3 33.0"/><path d="M32.5 117.3L31.5 117.4L30.8 118.2"/><path d="M129.1 139.4L129.5 140.1L130.2 140.5"/><path d="M86.4 139.0L85.9 140.1L86.0 141.3"/><path d="M52.7 119.1L52.3 119.9L51.6 120.5"/><path d="M53.9 8.5L54.0 9.2L54.1 9.9"/><path d="M53.8 78.3L53.5 79.1L53.3 79.9"/><path d="M2.4 146.8L2.2 148.0L2.9 149.1"/><path d="M162.4 146.8L162.2 148.0L162.9 149.1"/><path d="M97.9 115.2L98.2 115.9L98.9 116.2"/><path d="M21.7 122.4L22.8 122.8L24.0 122.9"/><path d="M86.4 93.1L86.2 94.2L85.8 95.2"/><path d="M52.2 117.8L52.9 118.6L53.2 119.6"/><path d="M125.1 48.7L124.2 49.5L123.3 50.4"/><path d="M45.3 83.6L44.5 83.7L44.2 84.4"/><path d="M76.8 104.3L76.1 104.9L75.2 104.7"/><path d="M35.8 120.9L36.5 121.1L37.2 120.8"/><path d="M9.8 79.5L9.6 80.3L9.0 80.8"/><path d="M57.6 23.3L58.5 23.9L58.8 25.0"/><path d="M26.6 4.1L25.9 4.6L25.1 4.5"/><path d="M79.3 100.8L79.8 101.8L80.4 102.7"/><path d="M50.8 144.2L51.8 144.6L52.8 144.1"/><path d="M103.9 64.0L103.3 64.3L102.6 64.5"/><path d="M66.6 146.9L65.6 147.1L64.8 147.7"/><path d="M40.1 41.2L40.3 42.0L40.9 42.6"/><path d="M120.7 101.8L121.5 102.8L122.6 103.4"/><path d="M92.2 24.6L91.1 25.1L90.3 26.0"/><path d="M119.7 131.0L120.2 131.7L120.8 132.3"/><path d="M143.1 25.0L142.6 25.9L142.1 26.8"/><path d="M91.7 140.5L92.7 141.3L93.8 141.7"/><path d="M123.8 137.5L124.8 138.1L124.9 139.3"/><path d="M46.5 3.5L47.6 3.9L48.7 3.3"/><path d="M46.5 163.5L47.6 163.9L48.7 163.3"/><path d="M146.4 23.6L145.9 24.1L145.7 24.9"/><path d="M108.7 13.4L109.2 14.4L109.4 15.6"/><path d="M140.3 156.7L141.1 156.7L141.8 157.2"/><path d="M140.3 -3.3L141.1 -3.3L141.8 -2.8"/><path d="M110.3 5.2L110.3 6.1L110.4 6.9"/><path d="M17.7 3.2L16.8 3.2L16.1 2.7"/><path d="M17.7 163.2L16.8 163.2L16.1 162.7"/><path d="M18.4 77.6L19.3 78.0L20.2 77.8"/><path d="M110.3 23.0L109.7 23.7L109.6 24.6"/><path d="M57.4 79.2L56.6 79.4L55.9 80.0"/><path d="M155.4 140.7L154.8 141.3L154.7 142.1"/><path d="M41.4 10.9L42.3 11.0L43.3 11.0"/><path d="M88.0 58.0L89.1 58.0L90.1 58.3"/><path d="M87.7 86.8L87.0 87.8L85.9 88.2"/><path d="M114.3 63.1L114.8 63.9L114.6 64.8"/><path d="M61.7 60.9L61.9 61.7L61.5 62.3"/><path d="M1.7 97.1L0.8 97.3L0.0 97.3"/><path d="M161.7 97.1L160.8 97.3L160.0 97.3"/><path d="M59.7 38.1L60.3 38.5L60.6 39.2"/><path d="M124.4 145.2L125.4 145.4L126.5 145.2"/><path d="M102.7 86.8L103.4 87.8L104.6 87.9"/><path d="M119.4 135.5L119.4 136.6L118.6 137.2"/><path d="M38.1 100.1L37.5 100.7L36.7 101.1"/><path d="M63.3 83.2L63.0 84.2L62.9 85.3"/><path d="M99.8 86.2L100.6 86.9L101.6 87.2"/><path d="M146.0 75.0L145.4 75.7L144.8 76.5"/><path d="M36.4 22.5L35.4 22.7L34.4 22.9"/><path d="M83.8 129.6L84.4 130.1L84.6 130.9"/><path d="M74.7 101.9L73.6 102.5L72.5 102.3"/><path d="M7.9 60.4L6.9 61.0L6.5 62.1"/><path d="M23.8 40.0L24.6 40.2L25.2 40.9"/><path d="M82.5 72.2L83.4 72.4L83.8 73.3"/><path d="M111.1 70.8L111.2 71.9L110.8 72.9"/><path d="M23.6 107.9L24.0 108.8L24.7 109.4"/><path d="M59.1 53.8L59.3 54.4L59.9 54.8"/><path d="M90.4 8.7L91.3 9.2L92.4 9.4"/><path d="M52.5 38.3L51.8 38.7L51.1 38.9"/><path d="M137.2 31.2L137.4 32.3L137.5 33.4"/><path d="M59.3 6.1L59.5 7.0L59.3 7.9"/><path d="M47.8 64.2L47.2 65.3L47.0 66.4"/><path d="M62.4 92.4L61.7 92.6L61.0 92.1"/><path d="M114.3 58.8L113.9 59.6L114.1 60.4"/><path d="M121.0 59.7L121.0 60.7L120.3 61.4"/><path d="M121.4 3.2L121.1 4.1L120.9 5.0"/><path d="M134.2 65.2L134.3 66.4L134.6 67.6"/><path d="M79.5 81.3L78.6 81.9L77.5 82.0"/><path d="M64.8 5.6L64.3 6.5L63.4 7.0"/><path d="M122.6 18.4L123.2 18.9L123.4 19.6"/><path d="M17.0 13.4L16.3 14.1L16.3 15.1"/><path d="M108.9 113.0L109.0 113.8L108.7 114.5"/><path d="M68.0 93.4L66.9 93.4L66.0 92.7"/><path d="M23.3 52.8L23.3 53.5L22.7 53.9"/><path d="M43.5 41.3L43.9 42.0L43.9 42.8"/><path d="M88.7 81.1L88.9 81.8L89.3 82.4"/><path d="M139.4 127.9L138.7 128.3L138.2 129.0"/><path d="M8.0 85.0L8.3 85.9L8.7 86.8"/><path d="M94.1 58.0L93.4 58.5L92.6 58.4"/><path d="M88.4 7.4L89.0 8.2L89.7 8.9"/></g></pattern>
<clipPath id="floorclip"><polygon points="428.0,525.6 632.0,478.6 719.0,508.5 621.9,532.0 428.0,532.0"/></clipPath>
</defs>
<rect id="leftedge" x="428" y="25" width="1.6" height="295" fill="#979797"/>
<polygon points="428.0,319.4 1024.0,179.7 1024.0,220.9 428.0,360.6" fill="#f6dcb8"/>
<polygon points="428.0,360.1 720.0,291.7 720.0,500.0 428.0,522.0" fill="url(#wall)"/>
<polygon points="507.6,341.9 566.2,328.2 566.2,486.3 507.6,498.5" fill="#f4f0e4"/>
<rect x="528.4" y="336.3" width="6.2" height="24.3" rx="2" fill="#bcc6c8"/>
<rect x="528.7" y="335.8" width="3.4" height="24.8" rx="1.7" fill="#4c5a5c"/>
<rect x="528.4" y="371.1" width="6.2" height="24.3" rx="2" fill="#bcc6c8"/>
<rect x="528.7" y="370.6" width="3.4" height="24.8" rx="1.7" fill="#4c5a5c"/>
<rect x="528.4" y="406.1" width="6.2" height="24.3" rx="2" fill="#bcc6c8"/>
<rect x="528.7" y="405.6" width="3.4" height="24.8" rx="1.7" fill="#4c5a5c"/>
<rect x="528.4" y="441.3" width="6.2" height="24.3" rx="2" fill="#bcc6c8"/>
<rect x="528.7" y="440.8" width="3.4" height="24.8" rx="1.7" fill="#4c5a5c"/>
<polygon points="507.2,498.3 576.0,484.0 576.0,495.0 507.2,505.5" fill="#8d8d8d"/>
<polygon points="566.2,328.2 576.0,325.9 576.0,484.2 566.2,486.3" fill="#2c2c2c"/>
<polygon points="428.0,521.8 632.0,475.5 632.0,478.6 428.0,525.6" fill="#9a9a9a"/>
<polygon points="632.0,312.3 720.0,291.7 720.0,507.0 632.0,477.0" fill="url(#dark)"/>
<polygon points="648.2,308.8 664.3,313.3 664.3,478.0 648.2,478.0" fill="#8e8e8e"/>
<rect x="648" y="309" width="0.9" height="169" fill="#b8b8b8"/>
<polygon points="664.3,313.3 674.7,316.3 674.7,480.0 664.3,478.0" fill="#9c9c9c"/>
<rect x="664.3" y="313.3" width="1.7" height="155.7" fill="#f2f2f2"/>
<rect x="666" y="313.8" width="2.2" height="155.2" fill="#9c9c9c"/>
<rect x="668.2" y="314.4" width="1.0" height="154.6" fill="#dcdcdc"/>
<rect x="669.2" y="314.7" width="1.0" height="154.3" fill="#6e6e6e"/>
<rect x="670.2" y="315.0" width="2.0" height="154.0" fill="#a8a8a8"/>
<rect x="672.2" y="315.6" width="1.0" height="153.4" fill="#e6e6e6"/>
<rect x="673.2" y="315.9" width="1.5" height="153.1" fill="#5c5c5c"/>
<polygon points="664.3,469.0 674.7,469.0 674.7,478.0 664.3,475.0" fill="#a0a0a0"/>
<polygon points="666.0,468.5 674.7,471.0 674.7,476.8 666.0,474.0" fill="#1e1e1e"/>
<polygon points="666.0,468.5 674.7,471.0 674.7,472.2 666.0,469.7" fill="#e0e0e0"/>
<polygon points="648.2,478.4 664.3,475.8 674.7,478.8 674.7,488.5 648.2,479.0" fill="#a6a6a6"/>
<polyline points="648.2,478.4 664.3,475.8 674.7,478.8" fill="none" stroke="#d8d8d8" stroke-width="0.7"/>
<polygon points="428.0,525.6 632.0,478.6 719.0,508.5 621.9,532.0 428.0,532.0" fill="#5d3b29"/>
<g clip-path="url(#floorclip)" stroke="#735241" stroke-width="0.8"><line x1="420" y1="474.1" x2="740" y2="399.5"/><line x1="420" y1="478.8" x2="740" y2="404.2"/><line x1="420" y1="483.5" x2="740" y2="408.9"/><line x1="420" y1="488.2" x2="740" y2="413.6"/><line x1="420" y1="492.9" x2="740" y2="418.3"/><line x1="420" y1="497.6" x2="740" y2="423.0"/><line x1="420" y1="502.3" x2="740" y2="427.7"/><line x1="420" y1="507.0" x2="740" y2="432.4"/><line x1="420" y1="511.7" x2="740" y2="437.1"/><line x1="420" y1="516.4" x2="740" y2="441.8"/><line x1="420" y1="521.1" x2="740" y2="446.5"/><line x1="420" y1="525.8" x2="740" y2="451.2"/><line x1="420" y1="530.5" x2="740" y2="455.9"/><line x1="420" y1="535.2" x2="740" y2="460.6"/><line x1="420" y1="539.9" x2="740" y2="465.3"/><line x1="420" y1="544.6" x2="740" y2="470.0"/><line x1="420" y1="549.3" x2="740" y2="474.7"/><line x1="420" y1="554.0" x2="740" y2="479.4"/><line x1="420" y1="558.7" x2="740" y2="484.1"/><line x1="420" y1="563.4" x2="740" y2="488.8"/><line x1="420" y1="568.1" x2="740" y2="493.5"/><line x1="420" y1="572.8" x2="740" y2="498.2"/><line x1="420" y1="577.5" x2="740" y2="502.9"/><line x1="420" y1="582.2" x2="740" y2="507.6"/><line x1="420" y1="586.9" x2="740" y2="512.3"/><line x1="420" y1="591.6" x2="740" y2="517.0"/><line x1="420" y1="596.3" x2="740" y2="521.7"/><line x1="420" y1="601.0" x2="740" y2="526.4"/><line x1="420" y1="605.7" x2="740" y2="531.1"/><line x1="427.0" y1="477.2" x2="435.0" y2="480.0" stroke-opacity="0.8"/><line x1="456.0" y1="475.1" x2="464.0" y2="477.9" stroke-opacity="0.8"/><line x1="421.0" y1="488.0" x2="429.0" y2="490.8" stroke-opacity="0.8"/><line x1="485.0" y1="473.1" x2="493.0" y2="475.9" stroke-opacity="0.8"/><line x1="450.0" y1="485.9" x2="458.0" y2="488.7" stroke-opacity="0.8"/><line x1="514.0" y1="471.0" x2="522.0" y2="473.8" stroke-opacity="0.8"/><line x1="479.0" y1="483.9" x2="487.0" y2="486.7" stroke-opacity="0.8"/><line x1="444.0" y1="496.7" x2="452.0" y2="499.5" stroke-opacity="0.8"/><line x1="508.0" y1="481.8" x2="516.0" y2="484.6" stroke-opacity="0.8"/><line x1="473.0" y1="494.7" x2="481.0" y2="497.5" stroke-opacity="0.8"/><line x1="537.0" y1="479.7" x2="545.0" y2="482.6" stroke-opacity="0.8"/><line x1="438.0" y1="507.5" x2="446.0" y2="510.3" stroke-opacity="0.8"/><line x1="502.0" y1="492.6" x2="510.0" y2="495.4" stroke-opacity="0.8"/><line x1="566.0" y1="477.7" x2="574.0" y2="480.5" stroke-opacity="0.8"/><line x1="467.0" y1="505.4" x2="475.0" y2="508.3" stroke-opacity="0.8"/><line x1="531.0" y1="490.5" x2="539.0" y2="493.4" stroke-opacity="0.8"/><line x1="595.0" y1="475.6" x2="603.0" y2="478.5" stroke-opacity="0.8"/><line x1="432.0" y1="518.3" x2="440.0" y2="521.1" stroke-opacity="0.8"/><line x1="496.0" y1="503.4" x2="504.0" y2="506.2" stroke-opacity="0.8"/><line x1="560.0" y1="488.5" x2="568.0" y2="491.3" stroke-opacity="0.8"/><line x1="624.0" y1="473.6" x2="632.0" y2="476.4" stroke-opacity="0.8"/><line x1="461.0" y1="516.2" x2="469.0" y2="519.1" stroke-opacity="0.8"/><line x1="525.0" y1="501.3" x2="533.0" y2="504.2" stroke-opacity="0.8"/><line x1="589.0" y1="486.4" x2="597.0" y2="489.3" stroke-opacity="0.8"/><line x1="653.0" y1="471.5" x2="661.0" y2="474.3" stroke-opacity="0.8"/><line x1="426.0" y1="529.1" x2="434.0" y2="531.9" stroke-opacity="0.8"/><line x1="490.0" y1="514.2" x2="498.0" y2="517.0" stroke-opacity="0.8"/><line x1="554.0" y1="499.3" x2="562.0" y2="502.1" stroke-opacity="0.8"/><line x1="618.0" y1="484.4" x2="626.0" y2="487.2" stroke-opacity="0.8"/><line x1="455.0" y1="527.0" x2="463.0" y2="529.9" stroke-opacity="0.8"/><line x1="519.0" y1="512.1" x2="527.0" y2="515.0" stroke-opacity="0.8"/><line x1="583.0" y1="497.2" x2="591.0" y2="500.1" stroke-opacity="0.8"/><line x1="647.0" y1="482.3" x2="655.0" y2="485.1" stroke-opacity="0.8"/><line x1="484.0" y1="525.0" x2="492.0" y2="527.8" stroke-opacity="0.8"/><line x1="548.0" y1="510.1" x2="556.0" y2="512.9" stroke-opacity="0.8"/><line x1="612.0" y1="495.2" x2="620.0" y2="498.0" stroke-opacity="0.8"/><line x1="676.0" y1="480.3" x2="684.0" y2="483.1" stroke-opacity="0.8"/><line x1="513.0" y1="522.9" x2="521.0" y2="525.8" stroke-opacity="0.8"/><line x1="577.0" y1="508.0" x2="585.0" y2="510.9" stroke-opacity="0.8"/><line x1="641.0" y1="493.1" x2="649.0" y2="495.9" stroke-opacity="0.8"/><line x1="705.0" y1="478.2" x2="713.0" y2="481.0" stroke-opacity="0.8"/><line x1="478.0" y1="535.8" x2="486.0" y2="538.6" stroke-opacity="0.8"/><line x1="542.0" y1="520.9" x2="550.0" y2="523.7" stroke-opacity="0.8"/><line x1="606.0" y1="506.0" x2="614.0" y2="508.8" stroke-opacity="0.8"/><line x1="670.0" y1="491.0" x2="678.0" y2="493.9" stroke-opacity="0.8"/><line x1="507.0" y1="533.7" x2="515.0" y2="536.6" stroke-opacity="0.8"/><line x1="571.0" y1="518.8" x2="579.0" y2="521.6" stroke-opacity="0.8"/><line x1="635.0" y1="503.9" x2="643.0" y2="506.7" stroke-opacity="0.8"/><line x1="699.0" y1="489.0" x2="707.0" y2="491.8" stroke-opacity="0.8"/><line x1="536.0" y1="531.7" x2="544.0" y2="534.5" stroke-opacity="0.8"/><line x1="600.0" y1="516.8" x2="608.0" y2="519.6" stroke-opacity="0.8"/><line x1="664.0" y1="501.8" x2="672.0" y2="504.7" stroke-opacity="0.8"/><line x1="565.0" y1="529.6" x2="573.0" y2="532.4" stroke-opacity="0.8"/><line x1="629.0" y1="514.7" x2="637.0" y2="517.5" stroke-opacity="0.8"/><line x1="693.0" y1="499.8" x2="701.0" y2="502.6" stroke-opacity="0.8"/><line x1="594.0" y1="527.6" x2="602.0" y2="530.4" stroke-opacity="0.8"/><line x1="658.0" y1="512.6" x2="666.0" y2="515.5" stroke-opacity="0.8"/><line x1="722.0" y1="497.7" x2="730.0" y2="500.6" stroke-opacity="0.8"/><line x1="623.0" y1="525.5" x2="631.0" y2="528.3" stroke-opacity="0.8"/><line x1="687.0" y1="510.6" x2="695.0" y2="513.4" stroke-opacity="0.8"/><line x1="652.0" y1="523.4" x2="660.0" y2="526.3" stroke-opacity="0.8"/><line x1="716.0" y1="508.5" x2="724.0" y2="511.4" stroke-opacity="0.8"/><line x1="681.0" y1="521.4" x2="689.0" y2="524.2" stroke-opacity="0.8"/><line x1="646.0" y1="534.2" x2="654.0" y2="537.1" stroke-opacity="0.8"/><line x1="710.0" y1="519.3" x2="718.0" y2="522.2" stroke-opacity="0.8"/><line x1="675.0" y1="532.2" x2="683.0" y2="535.0" stroke-opacity="0.8"/><line x1="704.0" y1="530.1" x2="712.0" y2="533.0" stroke-opacity="0.8"/></g>
<line x1="633" y1="477.6" x2="719" y2="508" stroke="#2a2a2a" stroke-width="1.3"/>
<polygon points="719.0,509.4 621.9,532.0 658.8,532.0 719.0,517.0" fill="#8a9287"/>
<polygon points="719.5,291.8 1024.0,220.4 1024.0,436.3 719.5,506.2" fill="url(#wall)"/>
<polygon points="719.5,506.2 1024.0,436.3 1024.0,446.9 719.5,516.8" fill="#8a8a8a"/>
<rect x="718.3" y="506.7" width="4.1" height="10.3" fill="#2a2a2a"/>
<clipPath id="swclip"><polygon points="719.5,516.8 1024.0,446.9 1024.0,485.5 824.7,532.0 658.8,532.0 719.0,517.0"/></clipPath>
<polygon points="719.5,516.8 1024.0,446.9 1024.0,485.5 824.7,532.0 658.8,532.0 719.0,517.0" fill="#bfbfbf"/>
<g clip-path="url(#swclip)" stroke="#a6a6a6" stroke-width="0.8" stroke-opacity="0.6"><line x1="640" y1="527.9" x2="1024" y2="440.0"/><line x1="640" y1="531.2" x2="1024" y2="443.3"/><line x1="640" y1="534.5" x2="1024" y2="446.6"/><line x1="640" y1="537.8" x2="1024" y2="449.9"/><line x1="640" y1="541.1" x2="1024" y2="453.2"/><line x1="640" y1="544.4" x2="1024" y2="456.5"/><line x1="640" y1="547.7" x2="1024" y2="459.8"/><line x1="640" y1="551.0" x2="1024" y2="463.1"/><line x1="640" y1="554.3" x2="1024" y2="466.4"/><line x1="640" y1="557.6" x2="1024" y2="469.7"/><line x1="640" y1="560.9" x2="1024" y2="473.0"/><line x1="640" y1="564.2" x2="1024" y2="476.3"/><line x1="640" y1="567.5" x2="1024" y2="479.6"/><line x1="640" y1="570.8" x2="1024" y2="482.9"/><line x1="640" y1="574.1" x2="1024" y2="486.2"/><line x1="640" y1="577.4" x2="1024" y2="489.5"/><line x1="652.0" y1="528.5" x2="656.5" y2="530.8" stroke-opacity="0.35"/><line x1="660.0" y1="526.7" x2="664.5" y2="528.9" stroke-opacity="0.35"/><line x1="668.0" y1="524.8" x2="672.5" y2="527.1" stroke-opacity="0.35"/><line x1="676.0" y1="523.0" x2="680.5" y2="525.3" stroke-opacity="0.35"/><line x1="684.0" y1="521.2" x2="688.5" y2="523.4" stroke-opacity="0.35"/><line x1="692.0" y1="519.3" x2="696.5" y2="521.6" stroke-opacity="0.35"/><line x1="700.0" y1="517.5" x2="704.5" y2="519.8" stroke-opacity="0.35"/><line x1="708.0" y1="515.7" x2="712.5" y2="517.9" stroke-opacity="0.35"/><line x1="716.0" y1="513.8" x2="720.5" y2="516.1" stroke-opacity="0.35"/><line x1="724.0" y1="512.0" x2="728.5" y2="514.3" stroke-opacity="0.35"/><line x1="732.0" y1="510.2" x2="736.5" y2="512.4" stroke-opacity="0.35"/><line x1="740.0" y1="508.3" x2="744.5" y2="510.6" stroke-opacity="0.35"/><line x1="748.0" y1="506.5" x2="752.5" y2="508.8" stroke-opacity="0.35"/><line x1="756.0" y1="504.7" x2="760.5" y2="506.9" stroke-opacity="0.35"/><line x1="764.0" y1="502.8" x2="768.5" y2="505.1" stroke-opacity="0.35"/><line x1="772.0" y1="501.0" x2="776.5" y2="503.3" stroke-opacity="0.35"/><line x1="780.0" y1="499.2" x2="784.5" y2="501.4" stroke-opacity="0.35"/><line x1="788.0" y1="497.3" x2="792.5" y2="499.6" stroke-opacity="0.35"/><line x1="796.0" y1="495.5" x2="800.5" y2="497.8" stroke-opacity="0.35"/><line x1="804.0" y1="493.7" x2="808.5" y2="495.9" stroke-opacity="0.35"/><line x1="812.0" y1="491.8" x2="816.5" y2="494.1" stroke-opacity="0.35"/><line x1="820.0" y1="490.0" x2="824.5" y2="492.3" stroke-opacity="0.35"/><line x1="828.0" y1="488.2" x2="832.5" y2="490.5" stroke-opacity="0.35"/><line x1="836.0" y1="486.4" x2="840.5" y2="488.6" stroke-opacity="0.35"/><line x1="844.0" y1="484.5" x2="848.5" y2="486.8" stroke-opacity="0.35"/><line x1="852.0" y1="482.7" x2="856.5" y2="485.0" stroke-opacity="0.35"/><line x1="860.0" y1="480.9" x2="864.5" y2="483.1" stroke-opacity="0.35"/><line x1="868.0" y1="479.0" x2="872.5" y2="481.3" stroke-opacity="0.35"/><line x1="876.0" y1="477.2" x2="880.5" y2="479.5" stroke-opacity="0.35"/><line x1="884.0" y1="475.4" x2="888.5" y2="477.6" stroke-opacity="0.35"/><line x1="892.0" y1="473.5" x2="896.5" y2="475.8" stroke-opacity="0.35"/><line x1="900.0" y1="471.7" x2="904.5" y2="474.0" stroke-opacity="0.35"/><line x1="908.0" y1="469.9" x2="912.5" y2="472.1" stroke-opacity="0.35"/><line x1="916.0" y1="468.0" x2="920.5" y2="470.3" stroke-opacity="0.35"/><line x1="924.0" y1="466.2" x2="928.5" y2="468.5" stroke-opacity="0.35"/><line x1="932.0" y1="464.4" x2="936.5" y2="466.6" stroke-opacity="0.35"/><line x1="940.0" y1="462.5" x2="944.5" y2="464.8" stroke-opacity="0.35"/><line x1="948.0" y1="460.7" x2="952.5" y2="463.0" stroke-opacity="0.35"/><line x1="956.0" y1="458.9" x2="960.5" y2="461.1" stroke-opacity="0.35"/><line x1="964.0" y1="457.0" x2="968.5" y2="459.3" stroke-opacity="0.35"/><line x1="972.0" y1="455.2" x2="976.5" y2="457.5" stroke-opacity="0.35"/><line x1="980.0" y1="453.4" x2="984.5" y2="455.6" stroke-opacity="0.35"/><line x1="988.0" y1="451.5" x2="992.5" y2="453.8" stroke-opacity="0.35"/><line x1="996.0" y1="449.7" x2="1000.5" y2="452.0" stroke-opacity="0.35"/><line x1="1004.0" y1="447.9" x2="1008.5" y2="450.1" stroke-opacity="0.35"/><line x1="1012.0" y1="446.0" x2="1016.5" y2="448.3" stroke-opacity="0.35"/><line x1="1020.0" y1="444.2" x2="1024.5" y2="446.5" stroke-opacity="0.35"/><line x1="1028.0" y1="442.4" x2="1032.5" y2="444.7" stroke-opacity="0.35"/><line x1="1036.0" y1="440.6" x2="1040.5" y2="442.8" stroke-opacity="0.35"/><line x1="656.0" y1="530.9" x2="660.5" y2="533.1" stroke-opacity="0.35"/><line x1="664.0" y1="529.0" x2="668.5" y2="531.3" stroke-opacity="0.35"/><line x1="672.0" y1="527.2" x2="676.5" y2="529.5" stroke-opacity="0.35"/><line x1="680.0" y1="525.4" x2="684.5" y2="527.6" stroke-opacity="0.35"/><line x1="688.0" y1="523.5" x2="692.5" y2="525.8" stroke-opacity="0.35"/><line x1="696.0" y1="521.7" x2="700.5" y2="524.0" stroke-opacity="0.35"/><line x1="704.0" y1="519.9" x2="708.5" y2="522.1" stroke-opacity="0.35"/><line x1="712.0" y1="518.0" x2="716.5" y2="520.3" stroke-opacity="0.35"/><line x1="720.0" y1="516.2" x2="724.5" y2="518.5" stroke-opacity="0.35"/><line x1="728.0" y1="514.4" x2="732.5" y2="516.7" stroke-opacity="0.35"/><line x1="736.0" y1="512.6" x2="740.5" y2="514.8" stroke-opacity="0.35"/><line x1="744.0" y1="510.7" x2="748.5" y2="513.0" stroke-opacity="0.35"/><line x1="752.0" y1="508.9" x2="756.5" y2="511.2" stroke-opacity="0.35"/><line x1="760.0" y1="507.1" x2="764.5" y2="509.3" stroke-opacity="0.35"/><line x1="768.0" y1="505.2" x2="772.5" y2="507.5" stroke-opacity="0.35"/><line x1="776.0" y1="503.4" x2="780.5" y2="505.7" stroke-opacity="0.35"/><line x1="784.0" y1="501.6" x2="788.5" y2="503.8" stroke-opacity="0.35"/><line x1="792.0" y1="499.7" x2="796.5" y2="502.0" stroke-opacity="0.35"/><line x1="800.0" y1="497.9" x2="804.5" y2="500.2" stroke-opacity="0.35"/><line x1="808.0" y1="496.1" x2="812.5" y2="498.3" stroke-opacity="0.35"/><line x1="816.0" y1="494.2" x2="820.5" y2="496.5" stroke-opacity="0.35"/><line x1="824.0" y1="492.4" x2="828.5" y2="494.7" stroke-opacity="0.35"/><line x1="832.0" y1="490.6" x2="836.5" y2="492.8" stroke-opacity="0.35"/><line x1="840.0" y1="488.7" x2="844.5" y2="491.0" stroke-opacity="0.35"/><line x1="848.0" y1="486.9" x2="852.5" y2="489.2" stroke-opacity="0.35"/><line x1="856.0" y1="485.1" x2="860.5" y2="487.3" stroke-opacity="0.35"/><line x1="864.0" y1="483.2" x2="868.5" y2="485.5" stroke-opacity="0.35"/><line x1="872.0" y1="481.4" x2="876.5" y2="483.7" stroke-opacity="0.35"/><line x1="880.0" y1="479.6" x2="884.5" y2="481.8" stroke-opacity="0.35"/><line x1="888.0" y1="477.7" x2="892.5" y2="480.0" stroke-opacity="0.35"/><line x1="896.0" y1="475.9" x2="900.5" y2="478.2" stroke-opacity="0.35"/><line x1="904.0" y1="474.1" x2="908.5" y2="476.3" stroke-opacity="0.35"/><line x1="912.0" y1="472.2" x2="916.5" y2="474.5" stroke-opacity="0.35"/><line x1="920.0" y1="470.4" x2="924.5" y2="472.7" stroke-opacity="0.35"/><line x1="928.0" y1="468.6" x2="932.5" y2="470.9" stroke-opacity="0.35"/><line x1="936.0" y1="466.8" x2="940.5" y2="469.0" stroke-opacity="0.35"/><line x1="944.0" y1="464.9" x2="948.5" y2="467.2" stroke-opacity="0.35"/><line x1="952.0" y1="463.1" x2="956.5" y2="465.4" stroke-opacity="0.35"/><line x1="960.0" y1="461.3" x2="964.5" y2="463.5" stroke-opacity="0.35"/><line x1="968.0" y1="459.4" x2="972.5" y2="461.7" stroke-opacity="0.35"/><line x1="976.0" y1="457.6" x2="980.5" y2="459.9" stroke-opacity="0.35"/><line x1="984.0" y1="455.8" x2="988.5" y2="458.0" stroke-opacity="0.35"/><line x1="992.0" y1="453.9" x2="996.5" y2="456.2" stroke-opacity="0.35"/><line x1="1000.0" y1="452.1" x2="1004.5" y2="454.4" stroke-opacity="0.35"/><line x1="1008.0" y1="450.3" x2="1012.5" y2="452.5" stroke-opacity="0.35"/><line x1="1016.0" y1="448.4" x2="1020.5" y2="450.7" stroke-opacity="0.35"/><line x1="1024.0" y1="446.6" x2="1028.5" y2="448.9" stroke-opacity="0.35"/><line x1="1032.0" y1="444.8" x2="1036.5" y2="447.0" stroke-opacity="0.35"/><line x1="668.0" y1="531.4" x2="672.5" y2="533.7" stroke-opacity="0.35"/><line x1="676.0" y1="529.6" x2="680.5" y2="531.9" stroke-opacity="0.35"/><line x1="684.0" y1="527.8" x2="688.5" y2="530.0" stroke-opacity="0.35"/><line x1="692.0" y1="525.9" x2="696.5" y2="528.2" stroke-opacity="0.35"/><line x1="700.0" y1="524.1" x2="704.5" y2="526.4" stroke-opacity="0.35"/><line x1="708.0" y1="522.3" x2="712.5" y2="524.5" stroke-opacity="0.35"/><line x1="716.0" y1="520.4" x2="720.5" y2="522.7" stroke-opacity="0.35"/><line x1="724.0" y1="518.6" x2="728.5" y2="520.9" stroke-opacity="0.35"/><line x1="732.0" y1="516.8" x2="736.5" y2="519.0" stroke-opacity="0.35"/><line x1="740.0" y1="514.9" x2="744.5" y2="517.2" stroke-opacity="0.35"/><line x1="748.0" y1="513.1" x2="752.5" y2="515.4" stroke-opacity="0.35"/><line x1="756.0" y1="511.3" x2="760.5" y2="513.5" stroke-opacity="0.35"/><line x1="764.0" y1="509.4" x2="768.5" y2="511.7" stroke-opacity="0.35"/><line x1="772.0" y1="507.6" x2="776.5" y2="509.9" stroke-opacity="0.35"/><line x1="780.0" y1="505.8" x2="784.5" y2="508.0" stroke-opacity="0.35"/><line x1="788.0" y1="503.9" x2="792.5" y2="506.2" stroke-opacity="0.35"/><line x1="796.0" y1="502.1" x2="800.5" y2="504.4" stroke-opacity="0.35"/><line x1="804.0" y1="500.3" x2="808.5" y2="502.5" stroke-opacity="0.35"/><line x1="812.0" y1="498.4" x2="816.5" y2="500.7" stroke-opacity="0.35"/><line x1="820.0" y1="496.6" x2="824.5" y2="498.9" stroke-opacity="0.35"/><line x1="828.0" y1="494.8" x2="832.5" y2="497.1" stroke-opacity="0.35"/><line x1="836.0" y1="493.0" x2="840.5" y2="495.2" stroke-opacity="0.35"/><line x1="844.0" y1="491.1" x2="848.5" y2="493.4" stroke-opacity="0.35"/><line x1="852.0" y1="489.3" x2="856.5" y2="491.6" stroke-opacity="0.35"/><line x1="860.0" y1="487.5" x2="864.5" y2="489.7" stroke-opacity="0.35"/><line x1="868.0" y1="485.6" x2="872.5" y2="487.9" stroke-opacity="0.35"/><line x1="876.0" y1="483.8" x2="880.5" y2="486.1" stroke-opacity="0.35"/><line x1="884.0" y1="482.0" x2="888.5" y2="484.2" stroke-opacity="0.35"/><line x1="892.0" y1="480.1" x2="896.5" y2="482.4" stroke-opacity="0.35"/><line x1="900.0" y1="478.3" x2="904.5" y2="480.6" stroke-opacity="0.35"/><line x1="908.0" y1="476.5" x2="912.5" y2="478.7" stroke-opacity="0.35"/><line x1="916.0" y1="474.6" x2="920.5" y2="476.9" stroke-opacity="0.35"/><line x1="924.0" y1="472.8" x2="928.5" y2="475.1" stroke-opacity="0.35"/><line x1="932.0" y1="471.0" x2="936.5" y2="473.2" stroke-opacity="0.35"/><line x1="940.0" y1="469.1" x2="944.5" y2="471.4" stroke-opacity="0.35"/><line x1="948.0" y1="467.3" x2="952.5" y2="469.6" stroke-opacity="0.35"/><line x1="956.0" y1="465.5" x2="960.5" y2="467.7" stroke-opacity="0.35"/><line x1="964.0" y1="463.6" x2="968.5" y2="465.9" stroke-opacity="0.35"/><line x1="972.0" y1="461.8" x2="976.5" y2="464.1" stroke-opacity="0.35"/><line x1="980.0" y1="460.0" x2="984.5" y2="462.2" stroke-opacity="0.35"/><line x1="988.0" y1="458.1" x2="992.5" y2="460.4" stroke-opacity="0.35"/><line x1="996.0" y1="456.3" x2="1000.5" y2="458.6" stroke-opacity="0.35"/><line x1="1004.0" y1="454.5" x2="1008.5" y2="456.7" stroke-opacity="0.35"/><line x1="1012.0" y1="452.6" x2="1016.5" y2="454.9" stroke-opacity="0.35"/><line x1="1020.0" y1="450.8" x2="1024.5" y2="453.1" stroke-opacity="0.35"/><line x1="1028.0" y1="449.0" x2="1032.5" y2="451.3" stroke-opacity="0.35"/><line x1="1036.0" y1="447.2" x2="1040.5" y2="449.4" stroke-opacity="0.35"/><line x1="680.0" y1="532.0" x2="684.5" y2="534.2" stroke-opacity="0.35"/><line x1="688.0" y1="530.1" x2="692.5" y2="532.4" stroke-opacity="0.35"/><line x1="696.0" y1="528.3" x2="700.5" y2="530.6" stroke-opacity="0.35"/><line x1="704.0" y1="526.5" x2="708.5" y2="528.7" stroke-opacity="0.35"/><line x1="712.0" y1="524.6" x2="716.5" y2="526.9" stroke-opacity="0.35"/><line x1="720.0" y1="522.8" x2="724.5" y2="525.1" stroke-opacity="0.35"/><line x1="728.0" y1="521.0" x2="732.5" y2="523.3" stroke-opacity="0.35"/><line x1="736.0" y1="519.2" x2="740.5" y2="521.4" stroke-opacity="0.35"/><line x1="744.0" y1="517.3" x2="748.5" y2="519.6" stroke-opacity="0.35"/><line x1="752.0" y1="515.5" x2="756.5" y2="517.8" stroke-opacity="0.35"/><line x1="760.0" y1="513.7" x2="764.5" y2="515.9" stroke-opacity="0.35"/><line x1="768.0" y1="511.8" x2="772.5" y2="514.1" stroke-opacity="0.35"/><line x1="776.0" y1="510.0" x2="780.5" y2="512.3" stroke-opacity="0.35"/><line x1="784.0" y1="508.2" x2="788.5" y2="510.4" stroke-opacity="0.35"/><line x1="792.0" y1="506.3" x2="796.5" y2="508.6" stroke-opacity="0.35"/><line x1="800.0" y1="504.5" x2="804.5" y2="506.8" stroke-opacity="0.35"/><line x1="808.0" y1="502.7" x2="812.5" y2="504.9" stroke-opacity="0.35"/><line x1="816.0" y1="500.8" x2="820.5" y2="503.1" stroke-opacity="0.35"/><line x1="824.0" y1="499.0" x2="828.5" y2="501.3" stroke-opacity="0.35"/><line x1="832.0" y1="497.2" x2="836.5" y2="499.4" stroke-opacity="0.35"/><line x1="840.0" y1="495.3" x2="844.5" y2="497.6" stroke-opacity="0.35"/><line x1="848.0" y1="493.5" x2="852.5" y2="495.8" stroke-opacity="0.35"/><line x1="856.0" y1="491.7" x2="860.5" y2="493.9" stroke-opacity="0.35"/><line x1="864.0" y1="489.8" x2="868.5" y2="492.1" stroke-opacity="0.35"/><line x1="872.0" y1="488.0" x2="876.5" y2="490.3" stroke-opacity="0.35"/><line x1="880.0" y1="486.2" x2="884.5" y2="488.4" stroke-opacity="0.35"/><line x1="888.0" y1="484.3" x2="892.5" y2="486.6" stroke-opacity="0.35"/><line x1="896.0" y1="482.5" x2="900.5" y2="484.8" stroke-opacity="0.35"/><line x1="904.0" y1="480.7" x2="908.5" y2="482.9" stroke-opacity="0.35"/><line x1="912.0" y1="478.8" x2="916.5" y2="481.1" stroke-opacity="0.35"/><line x1="920.0" y1="477.0" x2="924.5" y2="479.3" stroke-opacity="0.35"/><line x1="928.0" y1="475.2" x2="932.5" y2="477.5" stroke-opacity="0.35"/><line x1="936.0" y1="473.4" x2="940.5" y2="475.6" stroke-opacity="0.35"/><line x1="944.0" y1="471.5" x2="948.5" y2="473.8" stroke-opacity="0.35"/><line x1="952.0" y1="469.7" x2="956.5" y2="472.0" stroke-opacity="0.35"/><line x1="960.0" y1="467.9" x2="964.5" y2="470.1" stroke-opacity="0.35"/><line x1="968.0" y1="466.0" x2="972.5" y2="468.3" stroke-opacity="0.35"/><line x1="976.0" y1="464.2" x2="980.5" y2="466.5" stroke-opacity="0.35"/><line x1="984.0" y1="462.4" x2="988.5" y2="464.6" stroke-opacity="0.35"/><line x1="992.0" y1="460.5" x2="996.5" y2="462.8" stroke-opacity="0.35"/><line x1="1000.0" y1="458.7" x2="1004.5" y2="461.0" stroke-opacity="0.35"/><line x1="1008.0" y1="456.9" x2="1012.5" y2="459.1" stroke-opacity="0.35"/><line x1="1016.0" y1="455.0" x2="1020.5" y2="457.3" stroke-opacity="0.35"/><line x1="1024.0" y1="453.2" x2="1028.5" y2="455.5" stroke-opacity="0.35"/><line x1="1032.0" y1="451.4" x2="1036.5" y2="453.6" stroke-opacity="0.35"/><line x1="692.0" y1="532.5" x2="696.5" y2="534.8" stroke-opacity="0.35"/><line x1="700.0" y1="530.7" x2="704.5" y2="533.0" stroke-opacity="0.35"/><line x1="708.0" y1="528.9" x2="712.5" y2="531.1" stroke-opacity="0.35"/><line x1="716.0" y1="527.0" x2="720.5" y2="529.3" stroke-opacity="0.35"/><line x1="724.0" y1="525.2" x2="728.5" y2="527.5" stroke-opacity="0.35"/><line x1="732.0" y1="523.4" x2="736.5" y2="525.6" stroke-opacity="0.35"/><line x1="740.0" y1="521.5" x2="744.5" y2="523.8" stroke-opacity="0.35"/><line x1="748.0" y1="519.7" x2="752.5" y2="522.0" stroke-opacity="0.35"/><line x1="756.0" y1="517.9" x2="760.5" y2="520.1" stroke-opacity="0.35"/><line x1="764.0" y1="516.0" x2="768.5" y2="518.3" stroke-opacity="0.35"/><line x1="772.0" y1="514.2" x2="776.5" y2="516.5" stroke-opacity="0.35"/><line x1="780.0" y1="512.4" x2="784.5" y2="514.6" stroke-opacity="0.35"/><line x1="788.0" y1="510.5" x2="792.5" y2="512.8" stroke-opacity="0.35"/><line x1="796.0" y1="508.7" x2="800.5" y2="511.0" stroke-opacity="0.35"/><line x1="804.0" y1="506.9" x2="808.5" y2="509.1" stroke-opacity="0.35"/><line x1="812.0" y1="505.0" x2="816.5" y2="507.3" stroke-opacity="0.35"/><line x1="820.0" y1="503.2" x2="824.5" y2="505.5" stroke-opacity="0.35"/><line x1="828.0" y1="501.4" x2="832.5" y2="503.7" stroke-opacity="0.35"/><line x1="836.0" y1="499.6" x2="840.5" y2="501.8" stroke-opacity="0.35"/><line x1="844.0" y1="497.7" x2="848.5" y2="500.0" stroke-opacity="0.35"/><line x1="852.0" y1="495.9" x2="856.5" y2="498.2" stroke-opacity="0.35"/><line x1="860.0" y1="494.1" x2="864.5" y2="496.3" stroke-opacity="0.35"/><line x1="868.0" y1="492.2" x2="872.5" y2="494.5" stroke-opacity="0.35"/><line x1="876.0" y1="490.4" x2="880.5" y2="492.7" stroke-opacity="0.35"/><line x1="884.0" y1="488.6" x2="888.5" y2="490.8" stroke-opacity="0.35"/><line x1="892.0" y1="486.7" x2="896.5" y2="489.0" stroke-opacity="0.35"/><line x1="900.0" y1="484.9" x2="904.5" y2="487.2" stroke-opacity="0.35"/><line x1="908.0" y1="483.1" x2="912.5" y2="485.3" stroke-opacity="0.35"/><line x1="916.0" y1="481.2" x2="920.5" y2="483.5" stroke-opacity="0.35"/><line x1="924.0" y1="479.4" x2="928.5" y2="481.7" stroke-opacity="0.35"/><line x1="932.0" y1="477.6" x2="936.5" y2="479.8" stroke-opacity="0.35"/><line x1="940.0" y1="475.7" x2="944.5" y2="478.0" stroke-opacity="0.35"/><line x1="948.0" y1="473.9" x2="952.5" y2="476.2" stroke-opacity="0.35"/><line x1="956.0" y1="472.1" x2="960.5" y2="474.3" stroke-opacity="0.35"/><line x1="964.0" y1="470.2" x2="968.5" y2="472.5" stroke-opacity="0.35"/><line x1="972.0" y1="468.4" x2="976.5" y2="470.7" stroke-opacity="0.35"/><line x1="980.0" y1="466.6" x2="984.5" y2="468.8" stroke-opacity="0.35"/><line x1="988.0" y1="464.7" x2="992.5" y2="467.0" stroke-opacity="0.35"/><line x1="996.0" y1="462.9" x2="1000.5" y2="465.2" stroke-opacity="0.35"/><line x1="1004.0" y1="461.1" x2="1008.5" y2="463.3" stroke-opacity="0.35"/><line x1="1012.0" y1="459.2" x2="1016.5" y2="461.5" stroke-opacity="0.35"/><line x1="1020.0" y1="457.4" x2="1024.5" y2="459.7" stroke-opacity="0.35"/><line x1="1028.0" y1="455.6" x2="1032.5" y2="457.9" stroke-opacity="0.35"/><line x1="1036.0" y1="453.8" x2="1040.5" y2="456.0" stroke-opacity="0.35"/><line x1="712.0" y1="531.2" x2="716.5" y2="533.5" stroke-opacity="0.35"/><line x1="720.0" y1="529.4" x2="724.5" y2="531.7" stroke-opacity="0.35"/><line x1="728.0" y1="527.6" x2="732.5" y2="529.9" stroke-opacity="0.35"/><line x1="736.0" y1="525.8" x2="740.5" y2="528.0" stroke-opacity="0.35"/><line x1="744.0" y1="523.9" x2="748.5" y2="526.2" stroke-opacity="0.35"/><line x1="752.0" y1="522.1" x2="756.5" y2="524.4" stroke-opacity="0.35"/><line x1="760.0" y1="520.3" x2="764.5" y2="522.5" stroke-opacity="0.35"/><line x1="768.0" y1="518.4" x2="772.5" y2="520.7" stroke-opacity="0.35"/><line x1="776.0" y1="516.6" x2="780.5" y2="518.9" stroke-opacity="0.35"/><line x1="784.0" y1="514.8" x2="788.5" y2="517.0" stroke-opacity="0.35"/><line x1="792.0" y1="512.9" x2="796.5" y2="515.2" stroke-opacity="0.35"/><line x1="800.0" y1="511.1" x2="804.5" y2="513.4" stroke-opacity="0.35"/><line x1="808.0" y1="509.3" x2="812.5" y2="511.5" stroke-opacity="0.35"/><line x1="816.0" y1="507.4" x2="820.5" y2="509.7" stroke-opacity="0.35"/><line x1="824.0" y1="505.6" x2="828.5" y2="507.9" stroke-opacity="0.35"/><line x1="832.0" y1="503.8" x2="836.5" y2="506.0" stroke-opacity="0.35"/><line x1="840.0" y1="501.9" x2="844.5" y2="504.2" stroke-opacity="0.35"/><line x1="848.0" y1="500.1" x2="852.5" y2="502.4" stroke-opacity="0.35"/><line x1="856.0" y1="498.3" x2="860.5" y2="500.5" stroke-opacity="0.35"/><line x1="864.0" y1="496.4" x2="868.5" y2="498.7" stroke-opacity="0.35"/><line x1="872.0" y1="494.6" x2="876.5" y2="496.9" stroke-opacity="0.35"/><line x1="880.0" y1="492.8" x2="884.5" y2="495.0" stroke-opacity="0.35"/><line x1="888.0" y1="490.9" x2="892.5" y2="493.2" stroke-opacity="0.35"/><line x1="896.0" y1="489.1" x2="900.5" y2="491.4" stroke-opacity="0.35"/><line x1="904.0" y1="487.3" x2="908.5" y2="489.5" stroke-opacity="0.35"/><line x1="912.0" y1="485.4" x2="916.5" y2="487.7" stroke-opacity="0.35"/><line x1="920.0" y1="483.6" x2="924.5" y2="485.9" stroke-opacity="0.35"/><line x1="928.0" y1="481.8" x2="932.5" y2="484.1" stroke-opacity="0.35"/><line x1="936.0" y1="480.0" x2="940.5" y2="482.2" stroke-opacity="0.35"/><line x1="944.0" y1="478.1" x2="948.5" y2="480.4" stroke-opacity="0.35"/><line x1="952.0" y1="476.3" x2="956.5" y2="478.6" stroke-opacity="0.35"/><line x1="960.0" y1="474.5" x2="964.5" y2="476.7" stroke-opacity="0.35"/><line x1="968.0" y1="472.6" x2="972.5" y2="474.9" stroke-opacity="0.35"/><line x1="976.0" y1="470.8" x2="980.5" y2="473.1" stroke-opacity="0.35"/><line x1="984.0" y1="469.0" x2="988.5" y2="471.2" stroke-opacity="0.35"/><line x1="992.0" y1="467.1" x2="996.5" y2="469.4" stroke-opacity="0.35"/><line x1="1000.0" y1="465.3" x2="1004.5" y2="467.6" stroke-opacity="0.35"/><line x1="1008.0" y1="463.5" x2="1012.5" y2="465.7" stroke-opacity="0.35"/><line x1="1016.0" y1="461.6" x2="1020.5" y2="463.9" stroke-opacity="0.35"/><line x1="1024.0" y1="459.8" x2="1028.5" y2="462.1" stroke-opacity="0.35"/><line x1="1032.0" y1="458.0" x2="1036.5" y2="460.2" stroke-opacity="0.35"/><line x1="724.0" y1="531.8" x2="728.5" y2="534.1" stroke-opacity="0.35"/><line x1="732.0" y1="530.0" x2="736.5" y2="532.2" stroke-opacity="0.35"/><line x1="740.0" y1="528.1" x2="744.5" y2="530.4" stroke-opacity="0.35"/><line x1="748.0" y1="526.3" x2="752.5" y2="528.6" stroke-opacity="0.35"/><line x1="756.0" y1="524.5" x2="760.5" y2="526.7" stroke-opacity="0.35"/><line x1="764.0" y1="522.6" x2="768.5" y2="524.9" stroke-opacity="0.35"/><line x1="772.0" y1="520.8" x2="776.5" y2="523.1" stroke-opacity="0.35"/><line x1="780.0" y1="519.0" x2="784.5" y2="521.2" stroke-opacity="0.35"/><line x1="788.0" y1="517.1" x2="792.5" y2="519.4" stroke-opacity="0.35"/><line x1="796.0" y1="515.3" x2="800.5" y2="517.6" stroke-opacity="0.35"/><line x1="804.0" y1="513.5" x2="808.5" y2="515.7" stroke-opacity="0.35"/><line x1="812.0" y1="511.6" x2="816.5" y2="513.9" stroke-opacity="0.35"/><line x1="820.0" y1="509.8" x2="824.5" y2="512.1" stroke-opacity="0.35"/><line x1="828.0" y1="508.0" x2="832.5" y2="510.3" stroke-opacity="0.35"/><line x1="836.0" y1="506.2" x2="840.5" y2="508.4" stroke-opacity="0.35"/><line x1="844.0" y1="504.3" x2="848.5" y2="506.6" stroke-opacity="0.35"/><line x1="852.0" y1="502.5" x2="856.5" y2="504.8" stroke-opacity="0.35"/><line x1="860.0" y1="500.7" x2="864.5" y2="502.9" stroke-opacity="0.35"/><line x1="868.0" y1="498.8" x2="872.5" y2="501.1" stroke-opacity="0.35"/><line x1="876.0" y1="497.0" x2="880.5" y2="499.3" stroke-opacity="0.35"/><line x1="884.0" y1="495.2" x2="888.5" y2="497.4" stroke-opacity="0.35"/><line x1="892.0" y1="493.3" x2="896.5" y2="495.6" stroke-opacity="0.35"/><line x1="900.0" y1="491.5" x2="904.5" y2="493.8" stroke-opacity="0.35"/><line x1="908.0" y1="489.7" x2="912.5" y2="491.9" stroke-opacity="0.35"/><line x1="916.0" y1="487.8" x2="920.5" y2="490.1" stroke-opacity="0.35"/><line x1="924.0" y1="486.0" x2="928.5" y2="488.3" stroke-opacity="0.35"/><line x1="932.0" y1="484.2" x2="936.5" y2="486.4" stroke-opacity="0.35"/><line x1="940.0" y1="482.3" x2="944.5" y2="484.6" stroke-opacity="0.35"/><line x1="948.0" y1="480.5" x2="952.5" y2="482.8" stroke-opacity="0.35"/><line x1="956.0" y1="478.7" x2="960.5" y2="480.9" stroke-opacity="0.35"/><line x1="964.0" y1="476.8" x2="968.5" y2="479.1" stroke-opacity="0.35"/><line x1="972.0" y1="475.0" x2="976.5" y2="477.3" stroke-opacity="0.35"/><line x1="980.0" y1="473.2" x2="984.5" y2="475.4" stroke-opacity="0.35"/><line x1="988.0" y1="471.3" x2="992.5" y2="473.6" stroke-opacity="0.35"/><line x1="996.0" y1="469.5" x2="1000.5" y2="471.8" stroke-opacity="0.35"/><line x1="1004.0" y1="467.7" x2="1008.5" y2="469.9" stroke-opacity="0.35"/><line x1="1012.0" y1="465.8" x2="1016.5" y2="468.1" stroke-opacity="0.35"/><line x1="1020.0" y1="464.0" x2="1024.5" y2="466.3" stroke-opacity="0.35"/><line x1="1028.0" y1="462.2" x2="1032.5" y2="464.5" stroke-opacity="0.35"/><line x1="1036.0" y1="460.4" x2="1040.5" y2="462.6" stroke-opacity="0.35"/><line x1="736.0" y1="532.4" x2="740.5" y2="534.6" stroke-opacity="0.35"/><line x1="744.0" y1="530.5" x2="748.5" y2="532.8" stroke-opacity="0.35"/><line x1="752.0" y1="528.7" x2="756.5" y2="531.0" stroke-opacity="0.35"/><line x1="760.0" y1="526.9" x2="764.5" y2="529.1" stroke-opacity="0.35"/><line x1="768.0" y1="525.0" x2="772.5" y2="527.3" stroke-opacity="0.35"/><line x1="776.0" y1="523.2" x2="780.5" y2="525.5" stroke-opacity="0.35"/><line x1="784.0" y1="521.4" x2="788.5" y2="523.6" stroke-opacity="0.35"/><line x1="792.0" y1="519.5" x2="796.5" y2="521.8" stroke-opacity="0.35"/><line x1="800.0" y1="517.7" x2="804.5" y2="520.0" stroke-opacity="0.35"/><line x1="808.0" y1="515.9" x2="812.5" y2="518.1" stroke-opacity="0.35"/><line x1="816.0" y1="514.0" x2="820.5" y2="516.3" stroke-opacity="0.35"/><line x1="824.0" y1="512.2" x2="828.5" y2="514.5" stroke-opacity="0.35"/><line x1="832.0" y1="510.4" x2="836.5" y2="512.6" stroke-opacity="0.35"/><line x1="840.0" y1="508.5" x2="844.5" y2="510.8" stroke-opacity="0.35"/><line x1="848.0" y1="506.7" x2="852.5" y2="509.0" stroke-opacity="0.35"/><line x1="856.0" y1="504.9" x2="860.5" y2="507.1" stroke-opacity="0.35"/><line x1="864.0" y1="503.0" x2="868.5" y2="505.3" stroke-opacity="0.35"/><line x1="872.0" y1="501.2" x2="876.5" y2="503.5" stroke-opacity="0.35"/><line x1="880.0" y1="499.4" x2="884.5" y2="501.6" stroke-opacity="0.35"/><line x1="888.0" y1="497.5" x2="892.5" y2="499.8" stroke-opacity="0.35"/><line x1="896.0" y1="495.7" x2="900.5" y2="498.0" stroke-opacity="0.35"/><line x1="904.0" y1="493.9" x2="908.5" y2="496.1" stroke-opacity="0.35"/><line x1="912.0" y1="492.0" x2="916.5" y2="494.3" stroke-opacity="0.35"/><line x1="920.0" y1="490.2" x2="924.5" y2="492.5" stroke-opacity="0.35"/><line x1="928.0" y1="488.4" x2="932.5" y2="490.7" stroke-opacity="0.35"/><line x1="936.0" y1="486.6" x2="940.5" y2="488.8" stroke-opacity="0.35"/><line x1="944.0" y1="484.7" x2="948.5" y2="487.0" stroke-opacity="0.35"/><line x1="952.0" y1="482.9" x2="956.5" y2="485.2" stroke-opacity="0.35"/><line x1="960.0" y1="481.1" x2="964.5" y2="483.3" stroke-opacity="0.35"/><line x1="968.0" y1="479.2" x2="972.5" y2="481.5" stroke-opacity="0.35"/><line x1="976.0" y1="477.4" x2="980.5" y2="479.7" stroke-opacity="0.35"/><line x1="984.0" y1="475.6" x2="988.5" y2="477.8" stroke-opacity="0.35"/><line x1="992.0" y1="473.7" x2="996.5" y2="476.0" stroke-opacity="0.35"/><line x1="1000.0" y1="471.9" x2="1004.5" y2="474.2" stroke-opacity="0.35"/><line x1="1008.0" y1="470.1" x2="1012.5" y2="472.3" stroke-opacity="0.35"/><line x1="1016.0" y1="468.2" x2="1020.5" y2="470.5" stroke-opacity="0.35"/><line x1="1024.0" y1="466.4" x2="1028.5" y2="468.7" stroke-opacity="0.35"/><line x1="1032.0" y1="464.6" x2="1036.5" y2="466.8" stroke-opacity="0.35"/><line x1="748.0" y1="532.9" x2="752.5" y2="535.2" stroke-opacity="0.35"/><line x1="756.0" y1="531.1" x2="760.5" y2="533.3" stroke-opacity="0.35"/><line x1="764.0" y1="529.2" x2="768.5" y2="531.5" stroke-opacity="0.35"/><line x1="772.0" y1="527.4" x2="776.5" y2="529.7" stroke-opacity="0.35"/><line x1="780.0" y1="525.6" x2="784.5" y2="527.8" stroke-opacity="0.35"/><line x1="788.0" y1="523.7" x2="792.5" y2="526.0" stroke-opacity="0.35"/><line x1="796.0" y1="521.9" x2="800.5" y2="524.2" stroke-opacity="0.35"/><line x1="804.0" y1="520.1" x2="808.5" y2="522.3" stroke-opacity="0.35"/><line x1="812.0" y1="518.2" x2="816.5" y2="520.5" stroke-opacity="0.35"/><line x1="820.0" y1="516.4" x2="824.5" y2="518.7" stroke-opacity="0.35"/><line x1="828.0" y1="514.6" x2="832.5" y2="516.9" stroke-opacity="0.35"/><line x1="836.0" y1="512.8" x2="840.5" y2="515.0" stroke-opacity="0.35"/><line x1="844.0" y1="510.9" x2="848.5" y2="513.2" stroke-opacity="0.35"/><line x1="852.0" y1="509.1" x2="856.5" y2="511.4" stroke-opacity="0.35"/><line x1="860.0" y1="507.3" x2="864.5" y2="509.5" stroke-opacity="0.35"/><line x1="868.0" y1="505.4" x2="872.5" y2="507.7" stroke-opacity="0.35"/><line x1="876.0" y1="503.6" x2="880.5" y2="505.9" stroke-opacity="0.35"/><line x1="884.0" y1="501.8" x2="888.5" y2="504.0" stroke-opacity="0.35"/><line x1="892.0" y1="499.9" x2="896.5" y2="502.2" stroke-opacity="0.35"/><line x1="900.0" y1="498.1" x2="904.5" y2="500.4" stroke-opacity="0.35"/><line x1="908.0" y1="496.3" x2="912.5" y2="498.5" stroke-opacity="0.35"/><line x1="916.0" y1="494.4" x2="920.5" y2="496.7" stroke-opacity="0.35"/><line x1="924.0" y1="492.6" x2="928.5" y2="494.9" stroke-opacity="0.35"/><line x1="932.0" y1="490.8" x2="936.5" y2="493.0" stroke-opacity="0.35"/><line x1="940.0" y1="488.9" x2="944.5" y2="491.2" stroke-opacity="0.35"/><line x1="948.0" y1="487.1" x2="952.5" y2="489.4" stroke-opacity="0.35"/><line x1="956.0" y1="485.3" x2="960.5" y2="487.5" stroke-opacity="0.35"/><line x1="964.0" y1="483.4" x2="968.5" y2="485.7" stroke-opacity="0.35"/><line x1="972.0" y1="481.6" x2="976.5" y2="483.9" stroke-opacity="0.35"/><line x1="980.0" y1="479.8" x2="984.5" y2="482.0" stroke-opacity="0.35"/><line x1="988.0" y1="477.9" x2="992.5" y2="480.2" stroke-opacity="0.35"/><line x1="996.0" y1="476.1" x2="1000.5" y2="478.4" stroke-opacity="0.35"/><line x1="1004.0" y1="474.3" x2="1008.5" y2="476.5" stroke-opacity="0.35"/><line x1="1012.0" y1="472.4" x2="1016.5" y2="474.7" stroke-opacity="0.35"/><line x1="1020.0" y1="470.6" x2="1024.5" y2="472.9" stroke-opacity="0.35"/><line x1="1028.0" y1="468.8" x2="1032.5" y2="471.1" stroke-opacity="0.35"/><line x1="1036.0" y1="467.0" x2="1040.5" y2="469.2" stroke-opacity="0.35"/><line x1="768.0" y1="531.6" x2="772.5" y2="533.9" stroke-opacity="0.35"/><line x1="776.0" y1="529.8" x2="780.5" y2="532.1" stroke-opacity="0.35"/><line x1="784.0" y1="528.0" x2="788.5" y2="530.2" stroke-opacity="0.35"/><line x1="792.0" y1="526.1" x2="796.5" y2="528.4" stroke-opacity="0.35"/><line x1="800.0" y1="524.3" x2="804.5" y2="526.6" stroke-opacity="0.35"/><line x1="808.0" y1="522.5" x2="812.5" y2="524.7" stroke-opacity="0.35"/><line x1="816.0" y1="520.6" x2="820.5" y2="522.9" stroke-opacity="0.35"/><line x1="824.0" y1="518.8" x2="828.5" y2="521.1" stroke-opacity="0.35"/><line x1="832.0" y1="517.0" x2="836.5" y2="519.2" stroke-opacity="0.35"/><line x1="840.0" y1="515.1" x2="844.5" y2="517.4" stroke-opacity="0.35"/><line x1="848.0" y1="513.3" x2="852.5" y2="515.6" stroke-opacity="0.35"/><line x1="856.0" y1="511.5" x2="860.5" y2="513.7" stroke-opacity="0.35"/><line x1="864.0" y1="509.6" x2="868.5" y2="511.9" stroke-opacity="0.35"/><line x1="872.0" y1="507.8" x2="876.5" y2="510.1" stroke-opacity="0.35"/><line x1="880.0" y1="506.0" x2="884.5" y2="508.2" stroke-opacity="0.35"/><line x1="888.0" y1="504.1" x2="892.5" y2="506.4" stroke-opacity="0.35"/><line x1="896.0" y1="502.3" x2="900.5" y2="504.6" stroke-opacity="0.35"/><line x1="904.0" y1="500.5" x2="908.5" y2="502.7" stroke-opacity="0.35"/><line x1="912.0" y1="498.6" x2="916.5" y2="500.9" stroke-opacity="0.35"/><line x1="920.0" y1="496.8" x2="924.5" y2="499.1" stroke-opacity="0.35"/><line x1="928.0" y1="495.0" x2="932.5" y2="497.3" stroke-opacity="0.35"/><line x1="936.0" y1="493.2" x2="940.5" y2="495.4" stroke-opacity="0.35"/><line x1="944.0" y1="491.3" x2="948.5" y2="493.6" stroke-opacity="0.35"/><line x1="952.0" y1="489.5" x2="956.5" y2="491.8" stroke-opacity="0.35"/><line x1="960.0" y1="487.7" x2="964.5" y2="489.9" stroke-opacity="0.35"/><line x1="968.0" y1="485.8" x2="972.5" y2="488.1" stroke-opacity="0.35"/><line x1="976.0" y1="484.0" x2="980.5" y2="486.3" stroke-opacity="0.35"/><line x1="984.0" y1="482.2" x2="988.5" y2="484.4" stroke-opacity="0.35"/><line x1="992.0" y1="480.3" x2="996.5" y2="482.6" stroke-opacity="0.35"/><line x1="1000.0" y1="478.5" x2="1004.5" y2="480.8" stroke-opacity="0.35"/><line x1="1008.0" y1="476.7" x2="1012.5" y2="478.9" stroke-opacity="0.35"/><line x1="1016.0" y1="474.8" x2="1020.5" y2="477.1" stroke-opacity="0.35"/><line x1="1024.0" y1="473.0" x2="1028.5" y2="475.3" stroke-opacity="0.35"/><line x1="1032.0" y1="471.2" x2="1036.5" y2="473.4" stroke-opacity="0.35"/><line x1="780.0" y1="532.2" x2="784.5" y2="534.4" stroke-opacity="0.35"/><line x1="788.0" y1="530.3" x2="792.5" y2="532.6" stroke-opacity="0.35"/><line x1="796.0" y1="528.5" x2="800.5" y2="530.8" stroke-opacity="0.35"/><line x1="804.0" y1="526.7" x2="808.5" y2="528.9" stroke-opacity="0.35"/><line x1="812.0" y1="524.8" x2="816.5" y2="527.1" stroke-opacity="0.35"/><line x1="820.0" y1="523.0" x2="824.5" y2="525.3" stroke-opacity="0.35"/><line x1="828.0" y1="521.2" x2="832.5" y2="523.5" stroke-opacity="0.35"/><line x1="836.0" y1="519.4" x2="840.5" y2="521.6" stroke-opacity="0.35"/><line x1="844.0" y1="517.5" x2="848.5" y2="519.8" stroke-opacity="0.35"/><line x1="852.0" y1="515.7" x2="856.5" y2="518.0" stroke-opacity="0.35"/><line x1="860.0" y1="513.9" x2="864.5" y2="516.1" stroke-opacity="0.35"/><line x1="868.0" y1="512.0" x2="872.5" y2="514.3" stroke-opacity="0.35"/><line x1="876.0" y1="510.2" x2="880.5" y2="512.5" stroke-opacity="0.35"/><line x1="884.0" y1="508.4" x2="888.5" y2="510.6" stroke-opacity="0.35"/><line x1="892.0" y1="506.5" x2="896.5" y2="508.8" stroke-opacity="0.35"/><line x1="900.0" y1="504.7" x2="904.5" y2="507.0" stroke-opacity="0.35"/><line x1="908.0" y1="502.9" x2="912.5" y2="505.1" stroke-opacity="0.35"/><line x1="916.0" y1="501.0" x2="920.5" y2="503.3" stroke-opacity="0.35"/><line x1="924.0" y1="499.2" x2="928.5" y2="501.5" stroke-opacity="0.35"/><line x1="932.0" y1="497.4" x2="936.5" y2="499.6" stroke-opacity="0.35"/><line x1="940.0" y1="495.5" x2="944.5" y2="497.8" stroke-opacity="0.35"/><line x1="948.0" y1="493.7" x2="952.5" y2="496.0" stroke-opacity="0.35"/><line x1="956.0" y1="491.9" x2="960.5" y2="494.1" stroke-opacity="0.35"/><line x1="964.0" y1="490.0" x2="968.5" y2="492.3" stroke-opacity="0.35"/><line x1="972.0" y1="488.2" x2="976.5" y2="490.5" stroke-opacity="0.35"/><line x1="980.0" y1="486.4" x2="984.5" y2="488.6" stroke-opacity="0.35"/><line x1="988.0" y1="484.5" x2="992.5" y2="486.8" stroke-opacity="0.35"/><line x1="996.0" y1="482.7" x2="1000.5" y2="485.0" stroke-opacity="0.35"/><line x1="1004.0" y1="480.9" x2="1008.5" y2="483.1" stroke-opacity="0.35"/><line x1="1012.0" y1="479.0" x2="1016.5" y2="481.3" stroke-opacity="0.35"/><line x1="1020.0" y1="477.2" x2="1024.5" y2="479.5" stroke-opacity="0.35"/><line x1="1028.0" y1="475.4" x2="1032.5" y2="477.7" stroke-opacity="0.35"/><line x1="1036.0" y1="473.6" x2="1040.5" y2="475.8" stroke-opacity="0.35"/><line x1="792.0" y1="532.7" x2="796.5" y2="535.0" stroke-opacity="0.35"/><line x1="800.0" y1="530.9" x2="804.5" y2="533.2" stroke-opacity="0.35"/><line x1="808.0" y1="529.1" x2="812.5" y2="531.3" stroke-opacity="0.35"/><line x1="816.0" y1="527.2" x2="820.5" y2="529.5" stroke-opacity="0.35"/><line x1="824.0" y1="525.4" x2="828.5" y2="527.7" stroke-opacity="0.35"/><line x1="832.0" y1="523.6" x2="836.5" y2="525.8" stroke-opacity="0.35"/><line x1="840.0" y1="521.7" x2="844.5" y2="524.0" stroke-opacity="0.35"/><line x1="848.0" y1="519.9" x2="852.5" y2="522.2" stroke-opacity="0.35"/><line x1="856.0" y1="518.1" x2="860.5" y2="520.3" stroke-opacity="0.35"/><line x1="864.0" y1="516.2" x2="868.5" y2="518.5" stroke-opacity="0.35"/><line x1="872.0" y1="514.4" x2="876.5" y2="516.7" stroke-opacity="0.35"/><line x1="880.0" y1="512.6" x2="884.5" y2="514.8" stroke-opacity="0.35"/><line x1="888.0" y1="510.7" x2="892.5" y2="513.0" stroke-opacity="0.35"/><line x1="896.0" y1="508.9" x2="900.5" y2="511.2" stroke-opacity="0.35"/><line x1="904.0" y1="507.1" x2="908.5" y2="509.3" stroke-opacity="0.35"/><line x1="912.0" y1="505.2" x2="916.5" y2="507.5" stroke-opacity="0.35"/><line x1="920.0" y1="503.4" x2="924.5" y2="505.7" stroke-opacity="0.35"/><line x1="928.0" y1="501.6" x2="932.5" y2="503.9" stroke-opacity="0.35"/><line x1="936.0" y1="499.8" x2="940.5" y2="502.0" stroke-opacity="0.35"/><line x1="944.0" y1="497.9" x2="948.5" y2="500.2" stroke-opacity="0.35"/><line x1="952.0" y1="496.1" x2="956.5" y2="498.4" stroke-opacity="0.35"/><line x1="960.0" y1="494.3" x2="964.5" y2="496.5" stroke-opacity="0.35"/><line x1="968.0" y1="492.4" x2="972.5" y2="494.7" stroke-opacity="0.35"/><line x1="976.0" y1="490.6" x2="980.5" y2="492.9" stroke-opacity="0.35"/><line x1="984.0" y1="488.8" x2="988.5" y2="491.0" stroke-opacity="0.35"/><line x1="992.0" y1="486.9" x2="996.5" y2="489.2" stroke-opacity="0.35"/><line x1="1000.0" y1="485.1" x2="1004.5" y2="487.4" stroke-opacity="0.35"/><line x1="1008.0" y1="483.3" x2="1012.5" y2="485.5" stroke-opacity="0.35"/><line x1="1016.0" y1="481.4" x2="1020.5" y2="483.7" stroke-opacity="0.35"/><line x1="1024.0" y1="479.6" x2="1028.5" y2="481.9" stroke-opacity="0.35"/><line x1="1032.0" y1="477.8" x2="1036.5" y2="480.0" stroke-opacity="0.35"/><line x1="812.0" y1="531.4" x2="816.5" y2="533.7" stroke-opacity="0.35"/><line x1="820.0" y1="529.6" x2="824.5" y2="531.9" stroke-opacity="0.35"/><line x1="828.0" y1="527.8" x2="832.5" y2="530.1" stroke-opacity="0.35"/><line x1="836.0" y1="526.0" x2="840.5" y2="528.2" stroke-opacity="0.35"/><line x1="844.0" y1="524.1" x2="848.5" y2="526.4" stroke-opacity="0.35"/><line x1="852.0" y1="522.3" x2="856.5" y2="524.6" stroke-opacity="0.35"/><line x1="860.0" y1="520.5" x2="864.5" y2="522.7" stroke-opacity="0.35"/><line x1="868.0" y1="518.6" x2="872.5" y2="520.9" stroke-opacity="0.35"/><line x1="876.0" y1="516.8" x2="880.5" y2="519.1" stroke-opacity="0.35"/><line x1="884.0" y1="515.0" x2="888.5" y2="517.2" stroke-opacity="0.35"/><line x1="892.0" y1="513.1" x2="896.5" y2="515.4" stroke-opacity="0.35"/><line x1="900.0" y1="511.3" x2="904.5" y2="513.6" stroke-opacity="0.35"/><line x1="908.0" y1="509.5" x2="912.5" y2="511.7" stroke-opacity="0.35"/><line x1="916.0" y1="507.6" x2="920.5" y2="509.9" stroke-opacity="0.35"/><line x1="924.0" y1="505.8" x2="928.5" y2="508.1" stroke-opacity="0.35"/><line x1="932.0" y1="504.0" x2="936.5" y2="506.2" stroke-opacity="0.35"/><line x1="940.0" y1="502.1" x2="944.5" y2="504.4" stroke-opacity="0.35"/><line x1="948.0" y1="500.3" x2="952.5" y2="502.6" stroke-opacity="0.35"/><line x1="956.0" y1="498.5" x2="960.5" y2="500.7" stroke-opacity="0.35"/><line x1="964.0" y1="496.6" x2="968.5" y2="498.9" stroke-opacity="0.35"/><line x1="972.0" y1="494.8" x2="976.5" y2="497.1" stroke-opacity="0.35"/><line x1="980.0" y1="493.0" x2="984.5" y2="495.2" stroke-opacity="0.35"/><line x1="988.0" y1="491.1" x2="992.5" y2="493.4" stroke-opacity="0.35"/><line x1="996.0" y1="489.3" x2="1000.5" y2="491.6" stroke-opacity="0.35"/><line x1="1004.0" y1="487.5" x2="1008.5" y2="489.7" stroke-opacity="0.35"/><line x1="1012.0" y1="485.6" x2="1016.5" y2="487.9" stroke-opacity="0.35"/><line x1="1020.0" y1="483.8" x2="1024.5" y2="486.1" stroke-opacity="0.35"/><line x1="1028.0" y1="482.0" x2="1032.5" y2="484.3" stroke-opacity="0.35"/><line x1="1036.0" y1="480.2" x2="1040.5" y2="482.4" stroke-opacity="0.35"/><line x1="824.0" y1="532.0" x2="828.5" y2="534.3" stroke-opacity="0.35"/><line x1="832.0" y1="530.2" x2="836.5" y2="532.4" stroke-opacity="0.35"/><line x1="840.0" y1="528.3" x2="844.5" y2="530.6" stroke-opacity="0.35"/><line x1="848.0" y1="526.5" x2="852.5" y2="528.8" stroke-opacity="0.35"/><line x1="856.0" y1="524.7" x2="860.5" y2="526.9" stroke-opacity="0.35"/><line x1="864.0" y1="522.8" x2="868.5" y2="525.1" stroke-opacity="0.35"/><line x1="872.0" y1="521.0" x2="876.5" y2="523.3" stroke-opacity="0.35"/><line x1="880.0" y1="519.2" x2="884.5" y2="521.4" stroke-opacity="0.35"/><line x1="888.0" y1="517.3" x2="892.5" y2="519.6" stroke-opacity="0.35"/><line x1="896.0" y1="515.5" x2="900.5" y2="517.8" stroke-opacity="0.35"/><line x1="904.0" y1="513.7" x2="908.5" y2="515.9" stroke-opacity="0.35"/><line x1="912.0" y1="511.8" x2="916.5" y2="514.1" stroke-opacity="0.35"/><line x1="920.0" y1="510.0" x2="924.5" y2="512.3" stroke-opacity="0.35"/><line x1="928.0" y1="508.2" x2="932.5" y2="510.5" stroke-opacity="0.35"/><line x1="936.0" y1="506.4" x2="940.5" y2="508.6" stroke-opacity="0.35"/><line x1="944.0" y1="504.5" x2="948.5" y2="506.8" stroke-opacity="0.35"/><line x1="952.0" y1="502.7" x2="956.5" y2="505.0" stroke-opacity="0.35"/><line x1="960.0" y1="500.9" x2="964.5" y2="503.1" stroke-opacity="0.35"/><line x1="968.0" y1="499.0" x2="972.5" y2="501.3" stroke-opacity="0.35"/><line x1="976.0" y1="497.2" x2="980.5" y2="499.5" stroke-opacity="0.35"/><line x1="984.0" y1="495.4" x2="988.5" y2="497.6" stroke-opacity="0.35"/><line x1="992.0" y1="493.5" x2="996.5" y2="495.8" stroke-opacity="0.35"/><line x1="1000.0" y1="491.7" x2="1004.5" y2="494.0" stroke-opacity="0.35"/><line x1="1008.0" y1="489.9" x2="1012.5" y2="492.1" stroke-opacity="0.35"/><line x1="1016.0" y1="488.0" x2="1020.5" y2="490.3" stroke-opacity="0.35"/><line x1="1024.0" y1="486.2" x2="1028.5" y2="488.5" stroke-opacity="0.35"/><line x1="1032.0" y1="484.4" x2="1036.5" y2="486.6" stroke-opacity="0.35"/></g>
<line x1="722" y1="517.2" x2="1024" y2="447.4" stroke="#d0d0d0" stroke-width="1"/>
<polygon points="1024.0,480.0 1024.0,485.5 824.7,532.0 800.0,532.2" fill="#c4c4c4"/>
<line x1="1024" y1="480" x2="800" y2="532.2" stroke="#e4e4e4" stroke-width="1.1"/>
<polygon points="1024.0,485.5 1024.0,532.0 824.7,532.0" fill="#6a4f3e"/>
<polygon points="819.8,316.8 884.6,301.8 884.6,432.5 819.8,447.7" fill="#5b6667"/>
<polygon points="819.8,401.0 854.8,413.8 854.8,425.0 819.8,425.0" fill="#a89e80"/>
<polygon points="854.0,309.7 857.0,309.0 857.0,430.0 854.0,430.0" fill="#2a9ca0"/>
<polygon points="857.0,309.0 859.0,308.5 859.0,430.0 857.0,430.0" fill="#30c8d0"/>
<polygon points="859.0,308.5 861.0,308.0 861.0,430.0 859.0,430.0" fill="#48e8ec"/>
<polygon points="861.0,308.0 863.0,307.5 863.0,430.0 861.0,430.0" fill="#30c0c8"/>
<polygon points="863.0,307.5 864.5,307.1 864.5,430.0 863.0,430.0" fill="#58f0f0"/>
<polygon points="864.5,307.1 867.7,306.4 867.7,430.0 864.5,430.0" fill="#38d0d8"/>
<polygon points="819.8,424.8 854.8,414.0 867.7,424.0 867.7,428.0 819.8,437.5" fill="#3ad8e0"/>
<polygon points="819.8,424.8 854.8,414.0 856.0,416.0 819.8,427.0" fill="#58e8f0"/>
<polygon points="867.7,305.3 884.6,301.8 884.6,432.5 867.7,427.4" fill="#2b2b2b"/>
<polygon points="819.8,437.5 867.5,427.4 884.6,432.5 819.8,447.7" fill="#8e8e8e"/>
<polyline points="819.8,447.7 819.8,316.8 884.6,301.8 884.6,432.5" fill="none" stroke="#eadfd4" stroke-width="0.7"/>
<line x1="741.3" y1="203.9" x2="741.3" y2="285" stroke="#4f5d78" stroke-width="1"/>
<line x1="803.1" y1="190.3" x2="803.1" y2="295.9" stroke="#4f5d78" stroke-width="1"/>
<line x1="871.5" y1="173" x2="871.5" y2="280.6" stroke="#4f5d78" stroke-width="1"/>
<line x1="944.6" y1="156" x2="944.6" y2="237" stroke="#4f5d78" stroke-width="1"/>
<line x1="741.3" y1="212" x2="803.1" y2="198.5" stroke="#4f5d78" stroke-width="1"/>
<line x1="871.5" y1="181.5" x2="944.6" y2="165.5" stroke="#4f5d78" stroke-width="1"/>
<line x1="736.3" y1="218.5" x2="746.3" y2="205.5" stroke="#4f5d78" stroke-width="1"/>
<line x1="798.1" y1="205.0" x2="808.1" y2="192.0" stroke="#4f5d78" stroke-width="1"/>
<line x1="866.5" y1="188.0" x2="876.5" y2="175.0" stroke="#4f5d78" stroke-width="1"/>
<line x1="939.6" y1="172.0" x2="949.6" y2="159.0" stroke="#4f5d78" stroke-width="1"/>
<circle cx="741.3" cy="248.5" r="3.3" fill="#74a2dc" stroke="#3f4756" stroke-width="1.1"/>
<line x1="741.3" y1="245.0" x2="741.3" y2="252.0" stroke="#4f5d78" stroke-width="0.9"/>
<circle cx="803.1" cy="234.3" r="3.3" fill="#74a2dc" stroke="#3f4756" stroke-width="1.1"/>
<line x1="803.1" y1="230.8" x2="803.1" y2="237.8" stroke="#4f5d78" stroke-width="0.9"/>
<circle cx="871.5" cy="218" r="3.3" fill="#74a2dc" stroke="#3f4756" stroke-width="1.1"/>
<line x1="871.5" y1="214.5" x2="871.5" y2="221.5" stroke="#4f5d78" stroke-width="0.9"/>
<circle cx="944.6" cy="201.3" r="3.3" fill="#74a2dc" stroke="#3f4756" stroke-width="1.1"/>
<line x1="944.6" y1="197.8" x2="944.6" y2="204.8" stroke="#4f5d78" stroke-width="0.9"/>
<text x="0" y="3.6" transform="translate(769.3 190.8) rotate(-13.3) scale(0.96 1)" text-anchor="middle" font-size="12.5" fill="#d4955a" stroke="#d4955a" stroke-width="0.1" font-family="Liberation Sans">900.0</text>
<text x="0" y="3.6" transform="translate(904.6 159.4) rotate(-13.3) scale(0.96 1)" text-anchor="middle" font-size="12.5" fill="#d4955a" stroke="#d4955a" stroke-width="0.1" font-family="Liberation Sans">1068.0</text>
<line x1="905.6" y1="416.4" x2="905.6" y2="459.5" stroke="#56627a" stroke-width="0.9"/>
<line x1="883.6" y1="426" x2="913" y2="419" stroke="#4f5d78" stroke-width="0.8"/>
<line x1="890" y1="458" x2="913" y2="453" stroke="#4f5d78" stroke-width="0.8"/>
<line x1="900" y1="414" x2="911" y2="427" stroke="#4f5d78" stroke-width="1"/>
<line x1="900" y1="449" x2="911" y2="462" stroke="#4f5d78" stroke-width="1"/>
<circle cx="901.4" cy="421.5" r="3.3" fill="#74a2dc" stroke="#3f4756" stroke-width="1.1"/>
<circle cx="901.4" cy="455.8" r="3.3" fill="#74a2dc" stroke="#3f4756" stroke-width="1.1"/>
<text x="0" y="0" transform="translate(899.8 438) rotate(-90) scale(1.01 1)" text-anchor="middle" font-size="12.5" fill="#d09560" font-family="Liberation Sans">400.0</text>
</svg>

</body></html>
